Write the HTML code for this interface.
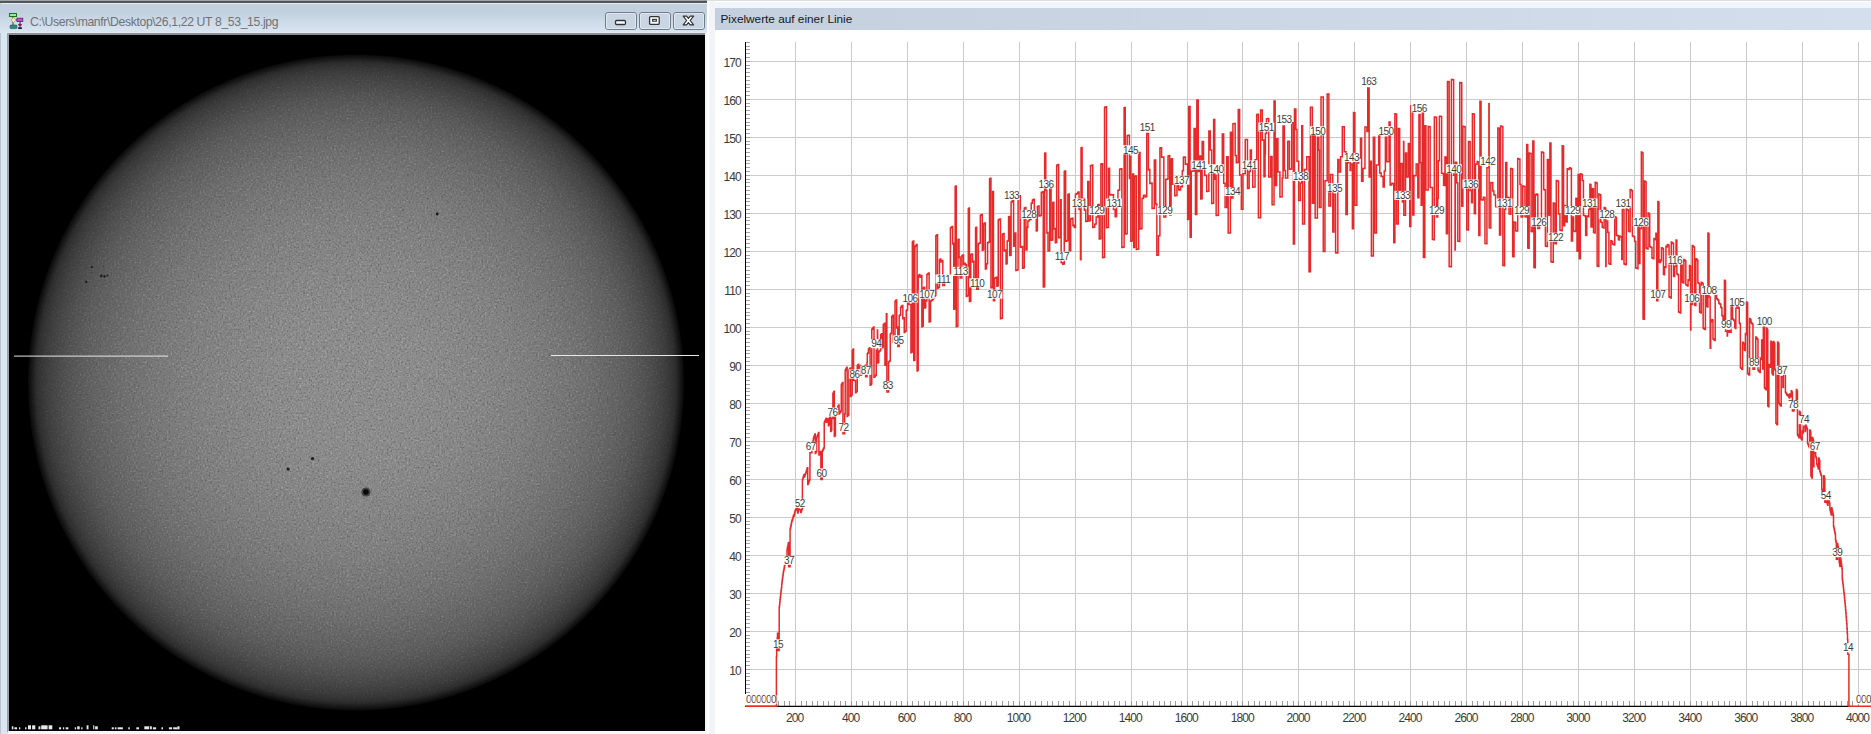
<!DOCTYPE html><html><head><meta charset="utf-8"><style>
html,body{margin:0;padding:0;background:#fff}body{width:1871px;height:734px;overflow:hidden;position:relative;font-family:"Liberation Sans",sans-serif}
svg{position:absolute;left:0;top:0}text{font-family:"Liberation Sans",sans-serif}
</style></head><body>
<svg width="1871" height="734" viewBox="0 0 1871 734">
<defs>
<linearGradient id="tg" x1="0" y1="0" x2="0" y2="1"><stop offset="0" stop-color="#c3cfdb"/><stop offset="0.3" stop-color="#c2d0de"/><stop offset="1" stop-color="#dae6f2"/></linearGradient>
<linearGradient id="rtg" x1="0" y1="0" x2="1" y2="0"><stop offset="0" stop-color="#c4d0de"/><stop offset="1" stop-color="#d3dfed"/></linearGradient>
<radialGradient id="sunm" cx="356" cy="382.5" r="328" gradientUnits="userSpaceOnUse"><stop offset="0.000" stop-color="#ffffff"/><stop offset="0.025" stop-color="#fefefe"/><stop offset="0.050" stop-color="#fefefe"/><stop offset="0.075" stop-color="#fefefe"/><stop offset="0.100" stop-color="#fdfdfd"/><stop offset="0.125" stop-color="#fdfdfd"/><stop offset="0.150" stop-color="#fcfcfc"/><stop offset="0.175" stop-color="#fbfbfb"/><stop offset="0.200" stop-color="#f9f9f9"/><stop offset="0.225" stop-color="#f8f8f8"/><stop offset="0.250" stop-color="#f7f7f7"/><stop offset="0.275" stop-color="#f5f5f5"/><stop offset="0.300" stop-color="#f3f3f3"/><stop offset="0.325" stop-color="#f1f1f1"/><stop offset="0.350" stop-color="#eeeeee"/><stop offset="0.375" stop-color="#ececec"/><stop offset="0.400" stop-color="#e9e9e9"/><stop offset="0.425" stop-color="#e6e6e6"/><stop offset="0.450" stop-color="#e3e3e3"/><stop offset="0.475" stop-color="#e0e0e0"/><stop offset="0.500" stop-color="#dcdcdc"/><stop offset="0.525" stop-color="#d8d8d8"/><stop offset="0.550" stop-color="#d4d4d4"/><stop offset="0.575" stop-color="#cfcfcf"/><stop offset="0.600" stop-color="#cacaca"/><stop offset="0.625" stop-color="#c5c5c5"/><stop offset="0.650" stop-color="#bfbfbf"/><stop offset="0.675" stop-color="#b9b9b9"/><stop offset="0.700" stop-color="#b3b3b3"/><stop offset="0.725" stop-color="#acacac"/><stop offset="0.750" stop-color="#a4a4a4"/><stop offset="0.775" stop-color="#9c9c9c"/><stop offset="0.800" stop-color="#939393"/><stop offset="0.825" stop-color="#898989"/><stop offset="0.850" stop-color="#7e7e7e"/><stop offset="0.875" stop-color="#727272"/><stop offset="0.900" stop-color="#656565"/><stop offset="0.925" stop-color="#565656"/><stop offset="0.950" stop-color="#444444"/><stop offset="0.975" stop-color="#2d2d2d"/><stop offset="1.000" stop-color="#030303"/></radialGradient>
<radialGradient id="sun" cx="356" cy="382.5" r="328" gradientUnits="userSpaceOnUse"><stop offset="0.000" stop-color="#8e8e8e"/><stop offset="0.025" stop-color="#8d8d8d"/><stop offset="0.050" stop-color="#8d8d8d"/><stop offset="0.075" stop-color="#8d8d8d"/><stop offset="0.100" stop-color="#8d8d8d"/><stop offset="0.125" stop-color="#8d8d8d"/><stop offset="0.150" stop-color="#8c8c8c"/><stop offset="0.175" stop-color="#8c8c8c"/><stop offset="0.200" stop-color="#8c8c8c"/><stop offset="0.225" stop-color="#8b8b8b"/><stop offset="0.250" stop-color="#8b8b8b"/><stop offset="0.275" stop-color="#8a8a8a"/><stop offset="0.300" stop-color="#898989"/><stop offset="0.325" stop-color="#888888"/><stop offset="0.350" stop-color="#878787"/><stop offset="0.375" stop-color="#878787"/><stop offset="0.400" stop-color="#858585"/><stop offset="0.425" stop-color="#848484"/><stop offset="0.450" stop-color="#838383"/><stop offset="0.475" stop-color="#828282"/><stop offset="0.500" stop-color="#808080"/><stop offset="0.525" stop-color="#7f7f7f"/><stop offset="0.550" stop-color="#7d7d7d"/><stop offset="0.575" stop-color="#7b7b7b"/><stop offset="0.600" stop-color="#797979"/><stop offset="0.625" stop-color="#777777"/><stop offset="0.650" stop-color="#757575"/><stop offset="0.675" stop-color="#727272"/><stop offset="0.700" stop-color="#707070"/><stop offset="0.725" stop-color="#6d6d6d"/><stop offset="0.750" stop-color="#696969"/><stop offset="0.775" stop-color="#666666"/><stop offset="0.800" stop-color="#626262"/><stop offset="0.825" stop-color="#5e5e5e"/><stop offset="0.850" stop-color="#595959"/><stop offset="0.875" stop-color="#535353"/><stop offset="0.900" stop-color="#4c4c4c"/><stop offset="0.925" stop-color="#444444"/><stop offset="0.950" stop-color="#3b3b3b"/><stop offset="0.975" stop-color="#2d2d2d"/><stop offset="1.000" stop-color="#080808"/></radialGradient>
<filter id="nzl" x="0" y="0" width="100%" height="100%"><feTurbulence type="fractalNoise" baseFrequency="0.55" numOctaves="1" seed="3"/><feColorMatrix type="matrix" values="0 0 0 0 1  0 0 0 0 1  0 0 0 0 1  3 0 0 0 -1.55"/></filter>
<filter id="nzd" x="0" y="0" width="100%" height="100%"><feTurbulence type="fractalNoise" baseFrequency="0.55" numOctaves="1" seed="9"/><feColorMatrix type="matrix" values="0 0 0 0 0  0 0 0 0 0  0 0 0 0 0  3 0 0 0 -1.55"/></filter>
<mask id="sunmask" maskUnits="userSpaceOnUse" x="0" y="0" width="710" height="734"><circle cx="356" cy="382.5" r="328" fill="url(#sunm)"/></mask>
<clipPath id="sunclip"><circle cx="356" cy="382.5" r="328"/></clipPath>
</defs>
<rect x="0" y="0" width="707" height="734" fill="#dae6f2"/>
<rect x="0" y="0" width="1" height="734" fill="#b9c5d1"/>
<rect x="0" y="3" width="707" height="30" fill="url(#tg)"/>
<rect x="0" y="0" width="707" height="1" fill="#9ea3a8"/>
<rect x="0" y="1" width="707" height="2" fill="#50565c"/>
<rect x="1" y="3" width="706" height="1" fill="#e9eef3"/>
<rect x="8" y="32" width="698" height="1" fill="#e4eaf0"/>
<rect x="8" y="33" width="698" height="2" fill="#8a8e94"/>
<rect x="7" y="33" width="2" height="699" fill="#9aa2aa"/>
<rect x="705" y="33" width="2" height="699" fill="#f4f7fa"/>
<rect x="8" y="731" width="699" height="3" fill="#f5f7f9"/>
<g><rect x="9.5" y="13.5" width="7" height="3" fill="#90f090" stroke="#207020" stroke-width="1"/><line x1="13" y1="16.5" x2="13" y2="26" stroke="#304030" stroke-width="1"/><path d="M13.5 17.5 L16 20 L13.5 22.5 L11 20 Z" fill="#f0eea0" stroke="#b0a070" stroke-width="0.8"/><rect x="10" y="25" width="7" height="3.6" rx="1" fill="#2b8a78" stroke="#1a5a50" stroke-width="0.6"/><line x1="16" y1="20" x2="17" y2="20" stroke="#303030" stroke-width="1"/><rect x="17" y="18.2" width="5.8" height="3.4" fill="#c050d0" stroke="#602070" stroke-width="0.8"/><line x1="20" y1="21.6" x2="20" y2="27" stroke="#303030" stroke-width="1"/><ellipse cx="20" cy="24.8" rx="2" ry="1.1" fill="#901838"/><rect x="18.2" y="27.2" width="3.6" height="1.8" fill="#14144a"/></g>
<text x="30" y="25.6" font-size="12.2" letter-spacing="-0.35" fill="#6f7276">C:\Users\manfr\Desktop\26,1,22 UT 8_53_15.jpg</text>
<rect x="605.5" y="12.5" width="31" height="17" rx="2.5" fill="#c9d5e2" stroke="#717c89" stroke-width="1"/>
<rect x="606.5" y="13.5" width="29" height="15" rx="1.5" fill="none" stroke="#dfe8f1" stroke-width="1"/>
<rect x="639.5" y="12.5" width="31" height="17" rx="2.5" fill="#c9d5e2" stroke="#717c89" stroke-width="1"/>
<rect x="640.5" y="13.5" width="29" height="15" rx="1.5" fill="none" stroke="#dfe8f1" stroke-width="1"/>
<rect x="673.5" y="12.5" width="31" height="17" rx="2.5" fill="#c9d5e2" stroke="#717c89" stroke-width="1"/>
<rect x="674.5" y="13.5" width="29" height="15" rx="1.5" fill="none" stroke="#dfe8f1" stroke-width="1"/>
<rect x="615.5" y="20.5" width="10" height="4" rx="1.2" fill="#ffffff" stroke="#2e3338" stroke-width="1.3"/>
<rect x="649.6" y="16.6" width="9.6" height="7.8" rx="1" fill="#ffffff" stroke="#2e3338" stroke-width="1.3"/>
<rect x="652.6" y="19.4" width="3.8" height="1.8" fill="none" stroke="#2e3338" stroke-width="1.1"/>
<path d="M683.2 16.2 L686.6 16.2 L688.4 18.4 L690.2 16.2 L693.6 16.2 L690.2 20.5 L693.6 24.8 L690.2 24.8 L688.4 22.6 L686.6 24.8 L683.2 24.8 L686.6 20.5 Z" fill="#ffffff" stroke="#2e3338" stroke-width="1.2" stroke-linejoin="round"/>
<rect x="9" y="35" width="696" height="696" fill="#000"/>
<circle cx="356" cy="382.5" r="328" fill="url(#sun)"/>
<g mask="url(#sunmask)"><rect x="28" y="54" width="657" height="658" filter="url(#nzl)" opacity="0.28"/><rect x="28" y="54" width="657" height="658" filter="url(#nzd)" opacity="0.28"/></g>
<circle cx="91.8" cy="267" r="1.1" fill="#151515" opacity="0.9"/>
<circle cx="86.3" cy="281.7" r="1.2" fill="#151515" opacity="0.9"/>
<circle cx="101.3" cy="275.9" r="1.3" fill="#151515" opacity="0.9"/>
<circle cx="104.5" cy="276.5" r="1.2" fill="#151515" opacity="0.9"/>
<circle cx="107.4" cy="275.6" r="1.0" fill="#151515" opacity="0.8"/>
<circle cx="103.4" cy="266.3" r="0.6" fill="#151515" opacity="0.6"/>
<circle cx="91.8" cy="272.5" r="0.6" fill="#151515" opacity="0.5"/>
<circle cx="288.1" cy="469.1" r="1.6" fill="#151515" opacity="0.9"/>
<circle cx="312.5" cy="458.6" r="1.7" fill="#151515" opacity="0.9"/>
<circle cx="437.2" cy="214" r="1.4" fill="#151515" opacity="1"/>
<circle cx="403.3" cy="210.1" r="0.7" fill="#151515" opacity="0.6"/>
<circle cx="365.9" cy="492" r="4.6" fill="#333" opacity="0.8"/><circle cx="365.9" cy="492" r="2.8" fill="#0a0a0a"/>
<rect x="14" y="355.6" width="154" height="1" fill="#e8e8e8"/>
<rect x="551" y="355" width="148" height="1" fill="#e8e8e8"/>
<rect x="11.8" y="726.3" width="1.6" height="3" fill="#e8e8e8"/><rect x="14.4" y="727.3" width="2.7" height="2" fill="#e8e8e8"/><rect x="19.0" y="727.3" width="1.3" height="2" fill="#e8e8e8"/><rect x="25.1" y="727.3" width="1.4" height="2" fill="#e8e8e8"/><rect x="28.0" y="725.3" width="3.0" height="4" fill="#e8e8e8"/><rect x="32.1" y="725.3" width="3.2" height="4" fill="#e8e8e8"/><rect x="38.5" y="726.3" width="1.9" height="3" fill="#e8e8e8"/><rect x="41.2" y="725.3" width="6.4" height="4" fill="#e8e8e8"/><rect x="48.6" y="725.3" width="3.7" height="4" fill="#e8e8e8"/><rect x="59.0" y="727.3" width="2.1" height="2" fill="#e8e8e8"/><rect x="62.9" y="727.3" width="1.3" height="2" fill="#e8e8e8"/><rect x="65.7" y="727.3" width="2.7" height="2" fill="#e8e8e8"/><rect x="74.8" y="727.3" width="1.3" height="2" fill="#e8e8e8"/><rect x="77.2" y="726.3" width="2.5" height="3" fill="#e8e8e8"/><rect x="81.2" y="727.3" width="1.3" height="2" fill="#e8e8e8"/><rect x="86.6" y="725.3" width="1.9" height="4" fill="#e8e8e8"/><rect x="93.2" y="725.3" width="1.1" height="4" fill="#e8e8e8"/><rect x="95.1" y="726.3" width="2.7" height="3" fill="#e8e8e8"/><rect x="111.7" y="727.3" width="2.1" height="2" fill="#e8e8e8"/><rect x="114.9" y="727.3" width="1.6" height="2" fill="#e8e8e8"/><rect x="117.6" y="727.3" width="5.3" height="2" fill="#e8e8e8"/><rect x="128.3" y="727.3" width="1.5" height="2" fill="#e8e8e8"/><rect x="136.3" y="727.3" width="2.7" height="2" fill="#e8e8e8"/><rect x="144.3" y="726.3" width="4.8" height="3" fill="#e8e8e8"/><rect x="149.9" y="726.3" width="1.9" height="3" fill="#e8e8e8"/><rect x="152.9" y="727.3" width="3.2" height="2" fill="#e8e8e8"/><rect x="161.4" y="727.3" width="1.6" height="2" fill="#e8e8e8"/><rect x="168.9" y="727.3" width="3.2" height="2" fill="#e8e8e8"/><rect x="173.2" y="727.3" width="4.3" height="2" fill="#e8e8e8"/><rect x="177.4" y="726.3" width="2.1" height="3" fill="#e8e8e8"/>
<rect x="707" y="0" width="1164" height="734" fill="#ffffff"/>
<rect x="707" y="0" width="1164" height="1" fill="#dedede"/>
<rect x="709" y="2" width="1162" height="6" fill="#f0f5fb"/>
<rect x="709" y="1" width="6" height="733" fill="#f3f4fa"/>
<rect x="715" y="8" width="1156" height="22" fill="url(#rtg)"/>
<text x="720.5" y="22.8" font-size="11.8" fill="#141824">Pixelwerte auf einer Linie</text>
<rect x="795" y="42" width="1" height="664" fill="#cbcbcb"/><rect x="851" y="42" width="1" height="664" fill="#cbcbcb"/><rect x="907" y="42" width="1" height="664" fill="#cbcbcb"/><rect x="963" y="42" width="1" height="664" fill="#cbcbcb"/><rect x="1019" y="42" width="1" height="664" fill="#cbcbcb"/><rect x="1075" y="42" width="1" height="664" fill="#cbcbcb"/><rect x="1131" y="42" width="1" height="664" fill="#cbcbcb"/><rect x="1187" y="42" width="1" height="664" fill="#cbcbcb"/><rect x="1242" y="42" width="1" height="664" fill="#cbcbcb"/><rect x="1298" y="42" width="1" height="664" fill="#cbcbcb"/><rect x="1354" y="42" width="1" height="664" fill="#cbcbcb"/><rect x="1410" y="42" width="1" height="664" fill="#cbcbcb"/><rect x="1466" y="42" width="1" height="664" fill="#cbcbcb"/><rect x="1522" y="42" width="1" height="664" fill="#cbcbcb"/><rect x="1578" y="42" width="1" height="664" fill="#cbcbcb"/><rect x="1634" y="42" width="1" height="664" fill="#cbcbcb"/><rect x="1690" y="42" width="1" height="664" fill="#cbcbcb"/><rect x="1746" y="42" width="1" height="664" fill="#cbcbcb"/><rect x="1802" y="42" width="1" height="664" fill="#cbcbcb"/><rect x="1858" y="42" width="1" height="664" fill="#cbcbcb"/><rect x="746" y="669" width="1125" height="1" fill="#cbcbcb"/><rect x="746" y="631" width="1125" height="1" fill="#cbcbcb"/><rect x="746" y="593" width="1125" height="1" fill="#cbcbcb"/><rect x="746" y="555" width="1125" height="1" fill="#cbcbcb"/><rect x="746" y="517" width="1125" height="1" fill="#cbcbcb"/><rect x="746" y="479" width="1125" height="1" fill="#cbcbcb"/><rect x="746" y="441" width="1125" height="1" fill="#cbcbcb"/><rect x="746" y="403" width="1125" height="1" fill="#cbcbcb"/><rect x="746" y="365" width="1125" height="1" fill="#cbcbcb"/><rect x="746" y="327" width="1125" height="1" fill="#cbcbcb"/><rect x="746" y="289" width="1125" height="1" fill="#cbcbcb"/><rect x="746" y="251" width="1125" height="1" fill="#cbcbcb"/><rect x="746" y="213" width="1125" height="1" fill="#cbcbcb"/><rect x="746" y="175" width="1125" height="1" fill="#cbcbcb"/><rect x="746" y="137" width="1125" height="1" fill="#cbcbcb"/><rect x="746" y="99" width="1125" height="1" fill="#cbcbcb"/><rect x="746" y="61" width="1125" height="1" fill="#cbcbcb"/>
<path d="M746 692.5h4M746 688.5h4M746 684.5h4M746 680.5h4M746 676.5h4M746 673.5h4M746 669.5h4M746 665.5h4M746 661.5h4M746 657.5h4M746 654.5h4M746 650.5h4M746 646.5h4M746 642.5h4M746 638.5h4M746 635.5h4M746 631.5h4M746 627.5h4M746 623.5h4M746 619.5h4M746 616.5h4M746 612.5h4M746 608.5h4M746 604.5h4M746 600.5h4M746 597.5h4M746 593.5h4M746 589.5h4M746 585.5h4M746 581.5h4M746 578.5h4M746 574.5h4M746 570.5h4M746 566.5h4M746 562.5h4M746 559.5h4M746 555.5h4M746 551.5h4M746 547.5h4M746 543.5h4M746 540.5h4M746 536.5h4M746 532.5h4M746 528.5h4M746 524.5h4M746 521.5h4M746 517.5h4M746 513.5h4M746 509.5h4M746 505.5h4M746 502.5h4M746 498.5h4M746 494.5h4M746 490.5h4M746 486.5h4M746 483.5h4M746 479.5h4M746 475.5h4M746 471.5h4M746 467.5h4M746 464.5h4M746 460.5h4M746 456.5h4M746 452.5h4M746 448.5h4M746 445.5h4M746 441.5h4M746 437.5h4M746 433.5h4M746 429.5h4M746 426.5h4M746 422.5h4M746 418.5h4M746 414.5h4M746 410.5h4M746 407.5h4M746 403.5h4M746 399.5h4M746 395.5h4M746 391.5h4M746 388.5h4M746 384.5h4M746 380.5h4M746 376.5h4M746 372.5h4M746 369.5h4M746 365.5h4M746 361.5h4M746 357.5h4M746 353.5h4M746 350.5h4M746 346.5h4M746 342.5h4M746 338.5h4M746 334.5h4M746 331.5h4M746 327.5h4M746 323.5h4M746 319.5h4M746 315.5h4M746 312.5h4M746 308.5h4M746 304.5h4M746 300.5h4M746 296.5h4M746 293.5h4M746 289.5h4M746 285.5h4M746 281.5h4M746 277.5h4M746 274.5h4M746 270.5h4M746 266.5h4M746 262.5h4M746 258.5h4M746 255.5h4M746 251.5h4M746 247.5h4M746 243.5h4M746 239.5h4M746 236.5h4M746 232.5h4M746 228.5h4M746 224.5h4M746 220.5h4M746 217.5h4M746 213.5h4M746 209.5h4M746 205.5h4M746 201.5h4M746 198.5h4M746 194.5h4M746 190.5h4M746 186.5h4M746 182.5h4M746 179.5h4M746 175.5h4M746 171.5h4M746 167.5h4M746 163.5h4M746 160.5h4M746 156.5h4M746 152.5h4M746 148.5h4M746 144.5h4M746 141.5h4M746 137.5h4M746 133.5h4M746 129.5h4M746 125.5h4M746 122.5h4M746 118.5h4M746 114.5h4M746 110.5h4M746 106.5h4M746 103.5h4M746 99.5h4M746 95.5h4M746 91.5h4M746 87.5h4M746 84.5h4M746 80.5h4M746 76.5h4M746 72.5h4M746 68.5h4M746 65.5h4M746 61.5h4M746 57.5h4M746 53.5h4M746 49.5h4M746 46.5h4M746 42.5h4" stroke="#a4a4a4" stroke-width="1" fill="none"/>
<path d="M778.5 701v5M784.5 701v5M789.5 701v5M795.5 701v5M801.5 701v5M806.5 701v5M812.5 701v5M817.5 701v5M823.5 701v5M828.5 701v5M834.5 701v5M840.5 701v5M845.5 701v5M851.5 701v5M856.5 701v5M862.5 701v5M868.5 701v5M873.5 701v5M879.5 701v5M884.5 701v5M890.5 701v5M896.5 701v5M901.5 701v5M907.5 701v5M912.5 701v5M918.5 701v5M924.5 701v5M929.5 701v5M935.5 701v5M940.5 701v5M946.5 701v5M952.5 701v5M957.5 701v5M963.5 701v5M968.5 701v5M974.5 701v5M980.5 701v5M985.5 701v5M991.5 701v5M996.5 701v5M1002.5 701v5M1008.5 701v5M1013.5 701v5M1019.5 701v5M1024.5 701v5M1030.5 701v5M1035.5 701v5M1041.5 701v5M1047.5 701v5M1052.5 701v5M1058.5 701v5M1063.5 701v5M1069.5 701v5M1075.5 701v5M1080.5 701v5M1086.5 701v5M1091.5 701v5M1097.5 701v5M1103.5 701v5M1108.5 701v5M1114.5 701v5M1119.5 701v5M1125.5 701v5M1131.5 701v5M1136.5 701v5M1142.5 701v5M1147.5 701v5M1153.5 701v5M1159.5 701v5M1164.5 701v5M1170.5 701v5M1175.5 701v5M1181.5 701v5M1187.5 701v5M1192.5 701v5M1198.5 701v5M1203.5 701v5M1209.5 701v5M1215.5 701v5M1220.5 701v5M1226.5 701v5M1231.5 701v5M1237.5 701v5M1242.5 701v5M1248.5 701v5M1254.5 701v5M1259.5 701v5M1265.5 701v5M1270.5 701v5M1276.5 701v5M1282.5 701v5M1287.5 701v5M1293.5 701v5M1298.5 701v5M1304.5 701v5M1310.5 701v5M1315.5 701v5M1321.5 701v5M1326.5 701v5M1332.5 701v5M1338.5 701v5M1343.5 701v5M1349.5 701v5M1354.5 701v5M1360.5 701v5M1366.5 701v5M1371.5 701v5M1377.5 701v5M1382.5 701v5M1388.5 701v5M1394.5 701v5M1399.5 701v5M1405.5 701v5M1410.5 701v5M1416.5 701v5M1422.5 701v5M1427.5 701v5M1433.5 701v5M1438.5 701v5M1444.5 701v5M1449.5 701v5M1455.5 701v5M1461.5 701v5M1466.5 701v5M1472.5 701v5M1477.5 701v5M1483.5 701v5M1489.5 701v5M1494.5 701v5M1500.5 701v5M1505.5 701v5M1511.5 701v5M1517.5 701v5M1522.5 701v5M1528.5 701v5M1533.5 701v5M1539.5 701v5M1545.5 701v5M1550.5 701v5M1556.5 701v5M1561.5 701v5M1567.5 701v5M1573.5 701v5M1578.5 701v5M1584.5 701v5M1589.5 701v5M1595.5 701v5M1601.5 701v5M1606.5 701v5M1612.5 701v5M1617.5 701v5M1623.5 701v5M1629.5 701v5M1634.5 701v5M1640.5 701v5M1645.5 701v5M1651.5 701v5M1657.5 701v5M1662.5 701v5M1668.5 701v5M1673.5 701v5M1679.5 701v5M1684.5 701v5M1690.5 701v5M1696.5 701v5M1701.5 701v5M1707.5 701v5M1712.5 701v5M1718.5 701v5M1724.5 701v5M1729.5 701v5M1735.5 701v5M1740.5 701v5M1746.5 701v5M1752.5 701v5M1757.5 701v5M1763.5 701v5M1768.5 701v5M1774.5 701v5M1780.5 701v5M1785.5 701v5M1791.5 701v5M1796.5 701v5M1802.5 701v5M1808.5 701v5M1813.5 701v5M1819.5 701v5M1824.5 701v5M1830.5 701v5M1836.5 701v5M1841.5 701v5M1847.5 701v5M1852.5 701v5M1858.5 701v5" stroke="#9a9a9a" stroke-width="1" fill="none"/>
<rect x="745" y="42" width="1" height="652" fill="#000"/>
<rect x="745" y="706" width="1106" height="1" fill="#000"/><rect x="745" y="705" width="1106" height="1" fill="#000" opacity="0.25"/>
<text x="741" y="674.7" font-size="12" text-anchor="end" fill="#3a3a3a" letter-spacing="-0.8">10</text><text x="741" y="636.7" font-size="12" text-anchor="end" fill="#3a3a3a" letter-spacing="-0.8">20</text><text x="741" y="598.7" font-size="12" text-anchor="end" fill="#3a3a3a" letter-spacing="-0.8">30</text><text x="741" y="560.7" font-size="12" text-anchor="end" fill="#3a3a3a" letter-spacing="-0.8">40</text><text x="741" y="522.7" font-size="12" text-anchor="end" fill="#3a3a3a" letter-spacing="-0.8">50</text><text x="741" y="484.7" font-size="12" text-anchor="end" fill="#3a3a3a" letter-spacing="-0.8">60</text><text x="741" y="446.7" font-size="12" text-anchor="end" fill="#3a3a3a" letter-spacing="-0.8">70</text><text x="741" y="408.7" font-size="12" text-anchor="end" fill="#3a3a3a" letter-spacing="-0.8">80</text><text x="741" y="370.7" font-size="12" text-anchor="end" fill="#3a3a3a" letter-spacing="-0.8">90</text><text x="741" y="332.6" font-size="12" text-anchor="end" fill="#3a3a3a" letter-spacing="-0.8">100</text><text x="741" y="294.6" font-size="12" text-anchor="end" fill="#3a3a3a" letter-spacing="-0.8">110</text><text x="741" y="256.6" font-size="12" text-anchor="end" fill="#3a3a3a" letter-spacing="-0.8">120</text><text x="741" y="218.6" font-size="12" text-anchor="end" fill="#3a3a3a" letter-spacing="-0.8">130</text><text x="741" y="180.6" font-size="12" text-anchor="end" fill="#3a3a3a" letter-spacing="-0.8">140</text><text x="741" y="142.6" font-size="12" text-anchor="end" fill="#3a3a3a" letter-spacing="-0.8">150</text><text x="741" y="104.6" font-size="12" text-anchor="end" fill="#3a3a3a" letter-spacing="-0.8">160</text><text x="741" y="66.6" font-size="12" text-anchor="end" fill="#3a3a3a" letter-spacing="-0.8">170</text><text x="794.6" y="721.8" font-size="12" text-anchor="middle" fill="#3a3a3a" letter-spacing="-0.9">200</text><text x="850.6" y="721.8" font-size="12" text-anchor="middle" fill="#3a3a3a" letter-spacing="-0.9">400</text><text x="906.5" y="721.8" font-size="12" text-anchor="middle" fill="#3a3a3a" letter-spacing="-0.9">600</text><text x="962.5" y="721.8" font-size="12" text-anchor="middle" fill="#3a3a3a" letter-spacing="-0.9">800</text><text x="1018.4" y="721.8" font-size="12" text-anchor="middle" fill="#3a3a3a" letter-spacing="-0.9">1000</text><text x="1074.3" y="721.8" font-size="12" text-anchor="middle" fill="#3a3a3a" letter-spacing="-0.9">1200</text><text x="1130.3" y="721.8" font-size="12" text-anchor="middle" fill="#3a3a3a" letter-spacing="-0.9">1400</text><text x="1186.2" y="721.8" font-size="12" text-anchor="middle" fill="#3a3a3a" letter-spacing="-0.9">1600</text><text x="1242.2" y="721.8" font-size="12" text-anchor="middle" fill="#3a3a3a" letter-spacing="-0.9">1800</text><text x="1298.1" y="721.8" font-size="12" text-anchor="middle" fill="#3a3a3a" letter-spacing="-0.9">2000</text><text x="1354.1" y="721.8" font-size="12" text-anchor="middle" fill="#3a3a3a" letter-spacing="-0.9">2200</text><text x="1410.0" y="721.8" font-size="12" text-anchor="middle" fill="#3a3a3a" letter-spacing="-0.9">2400</text><text x="1466.0" y="721.8" font-size="12" text-anchor="middle" fill="#3a3a3a" letter-spacing="-0.9">2600</text><text x="1521.9" y="721.8" font-size="12" text-anchor="middle" fill="#3a3a3a" letter-spacing="-0.9">2800</text><text x="1577.9" y="721.8" font-size="12" text-anchor="middle" fill="#3a3a3a" letter-spacing="-0.9">3000</text><text x="1633.8" y="721.8" font-size="12" text-anchor="middle" fill="#3a3a3a" letter-spacing="-0.9">3200</text><text x="1689.8" y="721.8" font-size="12" text-anchor="middle" fill="#3a3a3a" letter-spacing="-0.9">3400</text><text x="1745.7" y="721.8" font-size="12" text-anchor="middle" fill="#3a3a3a" letter-spacing="-0.9">3600</text><text x="1801.7" y="721.8" font-size="12" text-anchor="middle" fill="#3a3a3a" letter-spacing="-0.9">3800</text><text x="1857.6" y="721.8" font-size="12" text-anchor="middle" fill="#3a3a3a" letter-spacing="-0.9">4000</text>
<path d="M745.33 706.2H776.39V657.1H776.67V649.0H776.95V642.9H777.22V637.7H777.50V633.3H777.78V650.4H779.18V606.9H779.46V605.0H779.74V602.2H780.02V599.5H780.30V596.9H780.58V594.5H780.86V592.1H781.14V589.7H781.42V587.5H781.70V583.9H781.98V581.7H782.26V579.6H782.54V577.5H782.82V575.5H783.10V573.5H783.38V571.6H783.66V570.8H783.94V569.0H784.22V567.2H784.50V565.4H784.78V563.7H785.06V562.0H785.34V560.3H785.62V563.0H785.90V561.5H786.18V560.0H786.46V558.5H786.74V557.0H787.02V549.8H787.30V548.3H787.58V546.8H787.86V545.4H788.13V543.9H788.41V542.5H788.69V566.8H790.09V529.3H790.37V527.9H790.65V526.5H790.93V525.2H791.21V523.9H791.49V522.6H791.77V521.3H792.05V520.0H792.33V520.2H792.61V519.0H792.89V517.7H793.17V516.5H793.45V515.3H793.73V516.5H794.01V515.3H794.29V514.2H794.57V513.0H794.85V511.9H795.13V510.8H795.41V509.7H795.69V510.6H795.97V509.5H796.25V508.4H796.53V507.4H796.81V506.3H797.09V505.3H797.37V504.3H797.65V512.9H797.93V511.9H798.21V511.0H798.49V510.1H798.76V509.1H799.04V509.8H800.72V512.5H801.00V511.7H801.28V510.9H801.56V510.1H801.84V509.4H802.12V508.6H802.40V479.9H802.68V479.0H802.96V478.1H803.24V477.1H803.52V476.2H803.80V475.3H804.08V474.4H804.36V476.9H804.64V476.0H804.92V475.1H805.20V474.3H805.48V473.7H805.76V472.9H806.04V472.0H806.32V471.2H806.60V470.3H806.88V469.5H807.16V468.6H807.44V467.8H807.72V484.6H808.00V483.9H808.28V483.2H808.56V482.5H808.84V481.7H809.12V481.0H809.39V480.3H809.67V479.6H809.95V452.8H811.91V444.1H812.19V443.3H812.47V442.5H812.75V441.7H813.03V440.9H813.31V438.7H813.59V437.9H813.87V437.1H814.15V436.3H814.43V435.6H814.71V434.8H814.99V434.0H815.27V453.6H815.55V452.9H815.83V452.2H816.11V451.5H816.39V450.9H816.67V437.6H816.95V436.9H817.23V436.1H817.51V435.4H817.79V434.7H818.07V434.0H818.35V433.3H818.63V432.6H818.91V455.1H819.19V454.5H819.47V453.9H819.75V453.3H820.03V452.7H820.30V452.1H820.58V451.5H820.86V479.4H822.26V451.2H822.54V450.6H822.82V450.1H823.10V449.5H823.38V448.9H823.66V448.4H823.94V447.8H824.22V422.7H824.50V422.1H824.78V421.5H825.06V420.8H825.34V420.2H825.62V419.6H825.90V419.0H826.18V418.3H826.46V422.3H826.74V421.7H827.02V421.1H827.30V420.6H827.58V420.0H827.86V419.4H828.14V418.8H828.42V425.7H828.70V425.1H828.98V424.6H829.26V424.0H829.54V414.5H829.82V413.9H830.10V413.4H830.38V412.8H830.66V431.4H830.93V430.9H831.21V430.4H831.49V429.9H831.77V418.6H832.89V393.7H833.17V393.1H833.45V392.5H833.73V391.9H834.01V391.3H834.29V436.6H834.57V436.1H834.85V435.7H835.13V435.2H835.41V412.7H835.69V412.2H835.97V411.7H836.25V411.2H836.53V410.7H836.81V410.2H837.09V409.7H837.37V409.2H837.65V406.9H837.93V406.4H838.21V405.9H838.49V405.4H838.77V404.9H839.05V414.0H839.33V413.6H839.61V413.1H839.89V412.6H840.17V412.2H840.45V411.7H840.73V411.2H841.01V410.8H841.29V385.0H841.57V384.5H841.84V384.0H842.12V383.5H842.40V383.0H842.68V382.5H842.96V433.8H844.64V414.1H844.92V413.7H845.20V370.4H845.48V369.9H845.76V369.4H846.04V368.8H846.32V368.3H846.60V367.8H846.88V367.3H847.16V416.4H847.44V416.0H847.72V415.6H848.00V415.2H848.28V414.8H848.56V414.4H848.84V370.4H849.12V369.9H849.40V369.5H849.68V369.0H849.96V368.5H850.24V368.0H850.52V396.5H850.80V396.1H851.08V395.7H851.36V395.3H851.64V394.9H851.92V394.5H852.20V351.0H852.47V350.5H852.75V350.0H853.03V349.5H853.31V349.0H853.59V380.6H855.55V392.8H855.83V392.4H856.11V392.1H856.39V391.7H856.67V391.3H856.95V390.9H857.23V366.0H857.51V365.6H857.79V365.1H858.07V364.7H858.35V364.3H858.63V368.4H858.91V368.0H859.19V367.6H859.47V367.2H859.75V366.8H860.03V366.4H860.31V366.0H860.59V365.6H860.87V375.2H861.15V374.8H861.43V374.4H861.71V374.0H861.99V373.6H862.27V373.2H862.55V372.9H862.83V372.5H863.11V371.4H863.38V371.1H863.66V370.7H863.94V370.3H864.22V369.9H864.50V366.4H864.78V366.0H865.06V365.7H865.34V365.3H865.62V376.8H867.02V362.2H867.30V353.8H867.58V353.4H867.86V353.0H868.14V352.7H868.42V349.6H868.70V349.2H868.98V348.9H869.26V348.5H869.54V348.1H869.82V347.7H870.10V385.3H870.38V385.0H870.66V384.7H870.94V384.4H871.22V384.0H871.50V383.7H871.78V329.6H872.06V329.2H872.34V328.8H872.62V328.4H872.90V328.1H873.18V327.7H873.46V327.3H873.74V326.9H874.01V377.2H874.29V376.9H874.57V376.5H874.85V376.2H875.13V375.9H875.41V375.6H875.69V375.3H875.97V375.0H876.25V350.2H877.37V329.9H877.65V363.1H877.93V362.8H878.21V362.4H878.49V362.1H878.77V352.0H879.05V351.7H879.33V351.3H879.61V351.0H879.89V350.7H880.17V350.4H880.45V350.0H880.73V335.0H881.01V334.7H881.29V334.3H881.57V334.0H881.85V333.7H882.13V347.8H882.41V347.5H882.69V347.1H882.97V346.8H883.25V325.0H883.53V324.7H883.81V324.3H884.09V324.0H884.37V323.6H884.65V323.3H884.92V365.2H885.20V364.9H885.48V364.6H885.76V364.4H886.04V364.1H886.32V314.0H886.60V313.7H886.88V392.0H888.56V362.1H888.84V361.9H889.12V361.6H889.40V361.3H889.68V361.0H889.96V360.8H890.24V334.2H890.52V333.9H890.80V333.6H891.08V333.3H891.36V333.0H891.64V317.0H891.92V316.6H892.20V316.3H892.48V316.0H892.76V315.7H893.04V315.3H893.32V342.2H893.60V341.9H893.88V341.6H894.16V341.4H894.44V341.1H894.72V340.8H895.00V301.6H895.28V301.3H895.55V300.9H895.83V300.6H896.11V300.3H896.39V300.0H896.67V327.9H896.95V327.6H897.23V327.3H897.51V327.0H897.79V346.4H899.19V315.9H899.47V315.6H899.75V315.3H900.03V315.0H900.31V314.7H900.59V307.5H900.87V307.2H901.15V306.9H901.43V306.6H901.71V306.3H901.99V306.0H902.27V305.7H902.55V305.4H902.83V318.8H903.11V318.5H903.39V318.3H903.67V318.0H903.95V317.7H904.23V332.4H904.51V332.1H904.79V331.9H905.07V331.6H905.35V331.4H905.63V331.1H905.91V330.8H906.19V310.8H906.46V310.5H906.74V310.2H907.02V310.0H907.30V309.7H907.58V298.9H907.86V298.6H908.14V298.3H908.42V298.0H908.70V297.7H908.98V304.5H910.94V352.7H911.22V352.5H911.50V352.3H911.78V352.1H912.06V351.8H912.34V242.3H912.62V242.0H912.90V241.6H913.18V241.3H913.46V241.0H913.74V360.6H914.02V360.4H914.30V360.2H914.58V359.9H914.86V246.7H915.14V246.4H915.42V246.1H915.70V245.7H915.98V245.4H916.26V245.1H916.54V244.8H916.82V244.5H917.09V370.9H917.37V370.7H917.65V370.5H917.93V370.3H918.21V275.9H918.49V275.7H918.77V275.4H919.05V275.1H919.33V274.8H919.61V274.5H919.89V277.2H920.17V276.9H920.45V276.7H920.73V276.4H921.01V276.1H921.29V275.9H921.57V275.6H921.85V326.8H922.13V326.6H922.41V326.3H922.69V326.1H922.97V325.9H923.25V288.3H923.53V288.1H923.81V287.8H924.09V287.6H924.37V287.3H924.65V308.1H924.93V307.9H925.21V307.6H925.49V307.4H925.77V300.7H926.89V274.8H927.17V274.6H927.45V274.3H927.73V274.0H928.00V273.8H928.28V273.5H928.56V273.3H928.84V273.0H929.12V322.0H929.40V321.8H929.68V321.6H929.96V321.4H930.24V321.2H930.52V301.3H930.80V301.1H931.08V300.9H931.36V300.6H931.64V300.4H931.92V300.2H932.20V299.7H932.48V299.4H932.76V299.2H933.04V299.0H933.32V298.8H933.60V298.6H933.88V298.3H934.16V296.5H934.44V296.3H934.72V296.0H935.00V295.8H935.28V295.6H935.56V295.4H935.84V236.1H936.12V235.8H936.40V235.6H936.68V235.3H936.96V235.0H937.24V234.8H937.52V288.3H937.80V288.1H938.08V287.8H938.36V287.6H938.63V287.4H938.91V287.2H939.19V286.9H939.47V259.9H939.75V259.6H940.03V259.4H940.31V259.2H940.59V258.9H940.87V261.9H941.15V261.7H941.43V261.5H941.71V261.2H941.99V261.0H942.27V260.8H942.55V260.5H942.83V285.5H944.51V276.7H944.79V276.5H945.07V276.3H945.35V276.1H945.63V275.9H945.91V275.6H946.19V275.4H946.47V281.7H946.75V281.4H947.03V281.2H947.31V281.0H947.59V280.8H947.87V280.6H948.15V280.4H948.43V280.2H948.71V279.4H948.99V279.2H949.26V278.9H949.54V278.7H949.82V278.5H950.10V278.3H950.38V228.1H950.66V227.9H950.94V227.6H951.22V227.4H951.50V227.2H951.78V226.9H952.06V226.7H952.34V226.4H952.62V243.9H952.90V243.7H953.18V243.4H953.46V243.2H953.74V309.3H954.02V309.1H954.30V308.9H954.58V308.7H954.86V308.6H955.14V186.7H955.42V186.4H955.70V186.2H955.98V185.9H956.26V326.7H956.54V326.5H956.82V326.4H957.10V326.2H957.38V326.1H957.66V325.9H957.94V239.9H958.22V239.7H958.50V239.5H958.78V239.3H959.06V257.6H959.34V257.4H959.62V257.2H959.90V257.0H960.17V277.9H961.85V256.0H962.13V255.8H962.41V255.5H962.69V255.3H962.97V255.1H963.25V254.9H963.53V264.2H963.81V264.0H964.09V263.8H964.37V263.6H964.65V263.5H964.93V263.3H965.21V264.9H965.49V264.8H965.77V264.6H966.05V264.4H966.33V296.4H966.61V296.3H966.89V296.1H967.17V295.9H967.45V295.8H967.73V295.6H968.01V295.4H968.29V208.8H968.57V208.6H968.85V208.4H969.13V208.1H969.41V301.6H969.69V301.4H969.97V301.2H970.25V301.1H970.53V300.9H970.80V254.8H971.08V254.6H971.36V254.5H971.64V254.3H971.92V254.1H972.20V253.9H972.48V262.0H972.76V261.8H973.04V261.6H973.32V261.4H973.60V261.3H973.88V282.8H974.16V282.7H974.44V282.5H974.72V282.3H975.00V282.2H975.28V282.0H975.56V227.9H975.84V227.7H976.12V227.5H976.40V227.3H976.68V289.3H978.36V243.9H978.64V243.7H978.92V243.5H979.20V243.3H979.48V243.2H979.76V243.0H980.04V242.8H980.32V215.5H980.60V215.3H980.88V215.1H981.16V214.9H981.44V214.7H981.71V214.6H981.99V214.4H982.27V250.2H982.55V250.1H982.83V249.9H983.11V249.7H983.39V249.5H983.67V223.9H983.95V223.7H984.23V223.5H984.51V223.4H984.79V223.2H985.07V223.0H985.35V269.0H985.63V268.8H985.91V268.7H986.19V268.5H986.47V264.1H986.75V263.9H987.03V263.7H987.31V263.6H987.59V242.8H987.87V242.7H988.15V242.5H988.43V242.3H988.71V242.2H988.99V242.0H989.27V241.8H989.55V179.0H989.83V178.8H990.11V178.6H990.39V178.4H990.67V178.2H990.95V287.8H991.23V287.7H991.51V287.5H991.79V287.4H992.07V287.2H992.34V287.1H992.62V191.8H992.90V191.6H993.18V191.4H993.46V300.7H994.58V278.3H994.86V278.2H995.14V278.0H995.42V277.9H995.70V277.7H995.98V277.6H996.26V277.4H996.54V277.3H996.82V286.2H997.10V286.1H997.38V285.9H997.66V285.8H997.94V285.7H998.22V220.1H998.50V220.0H998.78V219.8H999.06V219.6H999.34V219.5H999.62V219.3H999.90V219.1H1000.18V219.0H1000.46V318.7H1000.74V318.5H1001.02V318.4H1001.30V318.3H1001.58V318.2H1001.86V318.1H1002.14V318.0H1002.42V234.3H1002.70V234.2H1002.98V234.0H1003.25V233.8H1003.53V233.7H1003.81V233.5H1004.09V250.9H1004.37V250.7H1004.65V250.6H1004.93V250.4H1005.21V250.3H1005.49V250.1H1005.77V250.0H1006.05V263.9H1006.33V263.8H1006.61V263.6H1006.89V263.5H1007.17V241.2H1007.45V241.0H1007.73V240.9H1008.01V240.7H1008.29V240.6H1008.57V217.0H1008.85V216.8H1009.13V216.7H1009.41V216.5H1009.69V255.6H1009.97V255.4H1010.25V255.3H1010.53V255.2H1010.81V255.0H1011.09V201.9H1012.21V195.2H1012.49V195.0H1012.77V194.8H1013.05V194.7H1013.33V194.5H1013.61V246.3H1013.88V246.1H1014.16V246.0H1014.44V245.9H1014.72V233.5H1015.00V233.3H1015.28V233.2H1015.56V233.0H1015.84V270.5H1016.12V270.4H1016.40V270.3H1016.68V270.2H1016.96V270.0H1017.24V269.9H1017.52V269.8H1017.80V269.7H1018.08V196.8H1018.36V196.7H1018.64V196.5H1018.92V196.3H1019.20V196.2H1019.48V196.0H1019.76V195.9H1020.04V195.7H1020.32V247.3H1020.60V247.2H1020.88V247.0H1021.16V246.9H1021.44V246.8H1021.72V246.6H1022.00V246.5H1022.28V246.4H1022.56V268.3H1022.84V268.2H1023.12V268.1H1023.40V267.9H1023.68V267.8H1023.96V267.7H1024.24V208.2H1024.52V208.0H1024.79V207.9H1025.07V207.7H1025.35V207.6H1025.63V207.5H1025.91V250.0H1026.19V249.9H1026.47V249.8H1026.75V249.6H1027.03V227.5H1027.31V227.4H1027.59V227.3H1027.87V220.9H1029.27V219.9H1029.55V219.8H1029.83V219.6H1030.11V219.5H1030.39V219.4H1030.67V219.2H1030.95V219.1H1031.23V203.4H1031.51V203.2H1031.79V203.1H1032.07V203.0H1032.35V200.2H1032.63V200.0H1032.91V199.9H1033.19V199.7H1033.47V199.6H1033.75V199.5H1034.03V199.3H1034.31V215.4H1034.59V215.3H1034.87V215.2H1035.15V215.1H1035.42V214.9H1035.70V214.8H1035.98V214.7H1036.26V230.9H1036.54V230.7H1036.82V230.6H1037.10V230.5H1037.38V206.6H1037.66V206.4H1037.94V206.3H1038.22V206.2H1038.50V206.0H1038.78V205.9H1039.06V216.1H1039.34V216.0H1039.62V215.9H1039.90V215.7H1040.18V215.6H1040.46V215.5H1040.74V215.4H1041.02V215.2H1041.30V192.6H1041.58V192.5H1041.86V192.3H1042.14V192.2H1042.42V192.0H1042.70V191.9H1042.98V191.8H1043.26V287.0H1043.54V286.9H1043.82V286.8H1044.10V286.7H1044.38V286.6H1044.66V153.4H1044.94V153.2H1045.22V153.1H1045.50V152.9H1045.78V190.5H1046.89V233.0H1047.17V232.9H1047.45V232.8H1047.73V232.6H1048.01V251.1H1048.29V251.0H1048.57V250.9H1048.85V250.8H1049.13V250.7H1049.41V250.6H1049.69V181.1H1049.97V181.0H1050.25V180.9H1050.53V180.7H1050.81V180.6H1051.09V240.3H1051.37V240.2H1051.65V240.1H1051.93V240.0H1052.21V239.9H1052.49V239.8H1052.77V202.7H1053.05V202.6H1053.33V202.5H1053.61V202.3H1053.89V228.9H1054.17V228.8H1054.45V228.7H1054.73V228.6H1055.01V228.5H1055.29V242.8H1055.57V242.7H1055.85V242.6H1056.13V242.5H1056.41V242.4H1056.69V165.4H1056.96V165.2H1057.24V165.1H1057.52V165.0H1057.80V164.9H1058.08V164.7H1058.36V164.6H1058.64V237.8H1058.92V237.7H1059.20V237.6H1059.48V237.5H1059.76V237.4H1060.04V237.3H1060.32V237.2H1060.60V199.8H1060.88V199.7H1061.16V262.7H1062.84V264.3H1063.12V264.2H1063.40V264.1H1063.68V264.0H1063.96V263.9H1064.24V171.5H1064.52V171.4H1064.80V171.3H1065.08V171.1H1065.36V171.0H1065.64V241.2H1065.92V241.1H1066.20V241.1H1066.48V241.0H1066.76V240.9H1067.04V240.8H1067.32V240.7H1067.60V240.6H1067.87V194.6H1068.15V194.4H1068.43V194.3H1068.71V194.2H1068.99V194.1H1069.27V251.0H1069.55V250.9H1069.83V250.8H1070.11V250.7H1070.39V250.6H1070.67V218.9H1070.95V218.8H1071.23V218.7H1071.51V218.6H1071.79V218.5H1072.07V218.4H1072.35V218.3H1072.63V218.2H1072.91V225.7H1073.19V225.6H1073.47V225.5H1073.75V225.4H1074.03V225.3H1074.31V227.6H1074.59V227.5H1074.87V227.4H1075.15V227.3H1075.43V194.3H1075.71V194.2H1075.99V194.1H1076.27V194.0H1076.55V193.9H1076.83V193.7H1077.11V193.6H1077.39V193.5H1077.67V192.4H1077.95V192.3H1078.23V192.2H1078.50V192.1H1078.78V191.9H1079.06V209.5H1080.46V259.7H1080.74V259.6H1081.02V147.9H1081.30V147.8H1081.58V147.7H1081.86V147.6H1082.14V199.3H1082.42V199.2H1082.70V199.1H1082.98V199.0H1083.26V198.9H1083.54V198.8H1083.82V198.7H1084.10V198.6H1084.38V210.2H1084.66V210.1H1084.94V210.1H1085.22V210.0H1085.50V209.9H1085.78V221.6H1086.06V221.5H1086.34V221.4H1086.62V221.3H1086.90V221.2H1087.18V221.2H1087.46V221.1H1087.74V181.7H1088.02V181.6H1088.30V181.5H1088.58V181.4H1088.86V221.0H1089.13V220.9H1089.41V220.8H1089.69V220.7H1089.97V220.6H1090.25V220.5H1090.53V165.8H1090.81V165.7H1091.09V165.6H1091.37V165.5H1091.65V165.4H1091.93V165.3H1092.21V165.2H1092.49V165.1H1092.77V227.5H1093.05V227.4H1093.33V227.3H1093.61V227.2H1093.89V227.1H1094.17V227.1H1094.45V227.0H1094.73V224.3H1095.01V224.2H1095.29V224.1H1095.57V224.0H1095.85V223.9H1096.13V217.1H1097.81V204.7H1098.09V204.6H1098.37V204.5H1098.65V204.5H1098.93V204.4H1099.21V238.9H1099.49V238.9H1099.77V238.8H1100.04V238.7H1100.32V238.6H1100.60V238.5H1100.88V164.2H1101.16V164.1H1101.44V164.0H1101.72V163.9H1102.00V163.8H1102.28V163.7H1102.56V257.7H1102.84V257.6H1103.12V257.5H1103.40V257.5H1103.68V257.4H1103.96V257.3H1104.24V257.2H1104.52V107.4H1104.80V107.3H1105.08V107.2H1105.36V107.1H1105.64V107.0H1105.92V106.9H1106.20V106.8H1106.48V227.7H1106.76V227.6H1107.04V227.5H1107.32V227.4H1107.60V227.4H1107.88V227.3H1108.16V227.2H1108.44V168.5H1108.72V168.5H1109.00V168.4H1109.28V168.3H1109.56V195.1H1109.84V195.0H1110.12V194.9H1110.40V194.8H1110.67V194.7H1110.95V194.7H1111.23V194.6H1111.51V194.5H1111.79V195.1H1112.07V195.0H1112.35V195.0H1112.63V194.9H1112.91V194.8H1113.19V194.7H1113.47V209.5H1115.15V216.8H1115.43V216.7H1115.71V216.7H1115.99V216.6H1116.27V216.5H1116.55V206.7H1116.83V206.6H1117.11V206.5H1117.39V206.4H1117.67V206.3H1117.95V190.3H1118.23V190.2H1118.51V190.2H1118.79V190.1H1119.07V190.0H1119.35V189.9H1119.63V169.3H1119.91V169.2H1120.19V169.1H1120.47V169.0H1120.75V168.9H1121.03V168.9H1121.31V168.8H1121.58V168.7H1121.86V247.5H1122.14V247.5H1122.42V247.4H1122.70V247.3H1122.98V247.3H1123.26V247.2H1123.54V247.1H1123.82V247.1H1124.10V107.8H1124.38V107.7H1124.66V107.6H1124.94V107.5H1125.22V234.1H1125.50V234.0H1125.78V234.0H1126.06V233.9H1126.34V233.8H1126.62V233.8H1126.90V233.7H1127.18V135.8H1127.46V135.7H1127.74V135.6H1128.02V135.5H1128.30V135.4H1128.58V135.3H1128.86V135.3H1129.14V135.2H1129.42V178.5H1129.70V156.3H1130.82V241.2H1131.10V241.1H1131.38V241.1H1131.66V241.0H1131.94V240.9H1132.21V240.9H1132.49V174.2H1132.77V174.1H1133.05V174.0H1133.33V173.9H1133.61V247.6H1133.89V247.5H1134.17V247.5H1134.45V247.4H1134.73V176.2H1135.01V176.2H1135.29V176.1H1135.57V176.0H1135.85V175.9H1136.13V175.9H1136.41V249.4H1136.69V249.3H1136.97V249.2H1137.25V249.2H1137.53V249.1H1137.81V249.1H1138.09V249.0H1138.37V248.9H1138.65V152.7H1138.93V152.6H1139.21V152.5H1139.49V152.5H1139.77V152.4H1140.05V228.9H1140.33V228.9H1140.61V228.8H1140.89V228.7H1141.17V228.7H1141.45V228.6H1141.73V228.6H1142.01V198.5H1142.29V198.4H1142.57V198.3H1142.85V198.3H1143.12V198.2H1143.40V195.5H1143.68V195.4H1143.96V195.4H1144.24V195.3H1144.52V195.2H1144.80V195.2H1145.08V196.9H1145.36V196.8H1145.64V196.7H1145.92V196.7H1146.20V196.6H1146.48V196.6H1146.76V133.5H1148.44V169.9H1148.72V169.8H1149.00V169.8H1149.28V169.7H1149.56V169.6H1149.84V183.6H1150.12V183.5H1150.40V183.5H1150.68V183.4H1150.96V183.3H1151.24V183.3H1151.52V183.2H1151.80V183.1H1152.08V208.6H1152.36V208.6H1152.64V208.5H1152.92V208.5H1153.20V208.4H1153.48V208.4H1153.75V208.3H1154.03V208.2H1154.31V160.3H1154.59V160.2H1154.87V160.1H1155.15V160.1H1155.43V160.0H1155.71V204.1H1155.99V204.1H1156.27V204.0H1156.55V204.0H1156.83V255.3H1157.11V255.2H1157.39V255.2H1157.67V255.1H1157.95V255.1H1158.23V255.0H1158.51V235.9H1158.79V235.9H1159.07V235.8H1159.35V235.8H1159.63V235.7H1159.91V148.0H1160.19V147.9H1160.47V147.9H1160.75V147.8H1161.03V147.7H1161.31V147.7H1161.59V157.3H1161.87V157.3H1162.15V157.2H1162.43V157.1H1162.71V157.1H1162.99V157.0H1163.27V156.9H1163.55V156.9H1163.83V217.1H1165.78V179.4H1166.06V179.4H1166.34V179.3H1166.62V179.2H1166.90V179.2H1167.18V179.1H1167.46V179.1H1167.74V179.0H1168.02V155.9H1168.30V155.9H1168.58V155.8H1168.86V155.7H1169.14V155.7H1169.42V155.6H1169.70V215.1H1169.98V215.0H1170.26V215.0H1170.54V214.9H1170.82V214.9H1171.10V159.1H1171.38V159.0H1171.66V159.0H1171.94V158.9H1172.22V158.8H1172.50V184.3H1172.78V184.3H1173.06V184.2H1173.34V184.2H1173.62V184.1H1173.90V184.1H1174.18V184.0H1174.46V184.0H1174.74V195.8H1175.02V195.7H1175.29V195.7H1175.57V195.6H1175.85V195.6H1176.13V195.5H1176.41V195.5H1176.69V195.4H1176.97V186.1H1177.25V186.0H1177.53V186.0H1177.81V185.9H1178.09V185.9H1178.37V185.8H1178.65V190.1H1178.93V190.0H1179.21V190.0H1179.49V189.9H1179.77V189.9H1180.05V189.8H1180.33V189.8H1180.61V186.7H1182.29V170.8H1182.57V170.7H1182.85V170.7H1183.13V170.6H1183.41V157.3H1183.69V157.2H1183.97V157.2H1184.25V157.1H1184.53V157.1H1184.81V157.0H1185.09V157.0H1185.37V164.3H1185.65V164.3H1185.93V164.2H1186.20V164.2H1186.48V164.1H1186.76V164.1H1187.04V164.0H1187.32V164.0H1187.60V219.4H1187.88V219.4H1188.16V219.3H1188.44V219.3H1188.72V106.6H1189.00V106.6H1189.28V106.5H1189.56V106.4H1189.84V106.4H1190.12V237.2H1190.40V237.2H1190.68V237.1H1190.96V237.1H1191.24V171.4H1191.52V171.3H1191.80V171.3H1192.08V171.2H1192.36V171.2H1192.64V171.1H1192.92V171.1H1193.20V171.0H1193.48V171.0H1193.76V170.9H1194.04V128.6H1194.32V128.6H1194.60V128.5H1194.88V128.5H1195.16V128.4H1195.44V214.5H1195.72V214.4H1196.00V214.4H1196.28V214.4H1196.56V214.3H1196.83V100.2H1197.11V100.2H1197.39V100.1H1197.67V100.1H1197.95V100.0H1198.23V171.5H1199.63V156.0H1199.91V156.0H1200.19V155.9H1200.47V155.9H1200.75V198.9H1201.03V198.8H1201.31V198.8H1201.59V198.7H1201.87V198.7H1202.15V141.6H1202.43V141.6H1202.71V141.6H1202.99V141.5H1203.27V141.5H1203.55V163.6H1203.83V163.5H1204.11V163.5H1204.39V163.4H1204.67V175.5H1204.95V175.4H1205.23V175.4H1205.51V175.3H1205.79V175.3H1206.07V175.3H1206.35V175.2H1206.63V191.5H1206.91V191.4H1207.19V191.4H1207.47V191.3H1207.74V191.3H1208.02V191.3H1208.30V191.2H1208.58V191.2H1208.86V131.1H1209.14V131.1H1209.42V131.1H1209.70V131.0H1209.98V131.0H1210.26V150.1H1210.54V150.0H1210.82V150.0H1211.10V149.9H1211.38V149.9H1211.66V203.4H1211.94V203.4H1212.22V203.3H1212.50V203.3H1212.78V203.3H1213.06V203.2H1213.34V203.2H1213.62V119.5H1213.90V119.5H1214.18V119.4H1214.46V119.4H1214.74V179.3H1215.02V175.3H1216.14V215.4H1216.42V215.4H1216.70V215.4H1216.98V215.3H1217.26V215.3H1217.54V215.3H1217.82V215.2H1218.10V215.2H1218.37V170.7H1218.65V170.6H1218.93V170.6H1219.21V170.5H1219.49V170.5H1219.77V170.5H1220.05V168.8H1220.33V168.8H1220.61V168.7H1220.89V168.7H1221.17V168.7H1221.45V168.6H1221.73V168.6H1222.01V168.6H1222.29V134.1H1222.57V134.1H1222.85V134.1H1223.13V134.0H1223.41V134.0H1223.69V183.3H1223.97V183.3H1224.25V183.2H1224.53V183.2H1224.81V183.2H1225.09V207.6H1225.37V207.5H1225.65V207.5H1225.93V207.5H1226.21V207.4H1226.49V207.4H1226.77V156.8H1227.05V156.8H1227.33V156.7H1227.61V156.7H1227.89V156.7H1228.17V233.1H1228.45V233.0H1228.73V233.0H1229.01V233.0H1229.28V233.0H1229.56V232.9H1229.84V232.9H1230.12V232.9H1230.40V132.4H1230.68V132.4H1230.96V132.3H1231.24V132.3H1231.52V132.3H1231.80V198.1H1232.92V123.8H1233.20V123.7H1233.48V123.7H1233.76V123.7H1234.04V123.6H1234.32V123.6H1234.60V123.6H1234.88V123.5H1235.16V155.6H1235.44V155.5H1235.72V155.5H1236.00V155.5H1236.28V162.7H1236.56V162.7H1236.84V162.7H1237.12V162.6H1237.40V162.6H1237.68V162.6H1237.96V162.5H1238.24V109.6H1238.52V109.6H1238.80V109.6H1239.08V109.5H1239.36V109.5H1239.64V175.0H1239.91V175.0H1240.19V175.0H1240.47V175.0H1240.75V174.9H1241.03V174.9H1241.31V209.3H1241.59V209.3H1241.87V209.3H1242.15V209.2H1242.43V209.2H1242.71V209.2H1242.99V173.9H1243.27V173.8H1243.55V173.8H1243.83V173.8H1244.11V173.8H1244.39V173.7H1244.67V173.7H1244.95V173.7H1245.23V139.6H1245.51V139.6H1245.79V139.5H1246.07V139.5H1246.35V139.5H1246.63V139.5H1246.91V139.4H1247.19V139.4H1247.47V188.4H1247.75V188.4H1248.03V188.4H1248.31V188.4H1248.59V188.3H1248.87V188.3H1249.15V171.5H1250.27V150.2H1250.54V150.2H1250.82V150.1H1251.10V150.1H1251.38V169.3H1251.66V169.3H1251.94V169.3H1252.22V169.2H1252.50V169.2H1252.78V187.2H1253.06V187.1H1253.34V187.1H1253.62V187.1H1253.90V187.1H1254.18V187.0H1254.46V187.0H1254.74V187.0H1255.02V159.9H1255.30V159.8H1255.58V159.8H1255.86V159.8H1256.14V159.8H1256.42V159.7H1256.70V114.4H1256.98V114.4H1257.26V114.4H1257.54V114.4H1257.82V114.3H1258.10V114.3H1258.38V217.8H1258.66V217.8H1258.94V217.7H1259.22V217.7H1259.50V217.7H1259.78V217.7H1260.06V217.7H1260.34V217.6H1260.62V110.0H1260.90V110.0H1261.18V110.0H1261.45V110.0H1261.73V109.9H1262.01V109.9H1262.29V140.2H1262.57V140.2H1262.85V140.2H1263.13V140.2H1263.41V140.1H1263.69V140.1H1263.97V176.7H1264.25V176.6H1264.53V176.6H1264.81V176.6H1265.09V153.8H1265.37V133.5H1266.49V118.7H1266.77V118.7H1267.05V118.7H1267.33V118.7H1267.61V118.7H1267.89V118.6H1268.17V118.6H1268.45V118.6H1268.73V177.1H1269.01V177.0H1269.29V177.0H1269.57V177.0H1269.85V177.0H1270.13V177.0H1270.41V177.0H1270.69V156.6H1270.97V156.5H1271.25V156.5H1271.53V156.5H1271.81V156.5H1272.08V204.8H1272.36V204.7H1272.64V204.7H1272.92V204.7H1273.20V204.7H1273.48V204.7H1273.76V204.7H1274.04V101.1H1274.32V101.1H1274.60V101.0H1274.88V101.0H1275.16V185.6H1275.44V185.5H1275.72V185.5H1276.00V185.5H1276.28V185.5H1276.56V138.8H1276.84V138.8H1277.12V138.8H1277.40V138.7H1277.68V138.7H1277.96V172.1H1278.24V172.1H1278.52V172.1H1278.80V172.0H1279.08V172.0H1279.36V172.0H1279.64V172.0H1279.92V196.9H1280.20V196.8H1280.48V196.8H1280.76V196.8H1281.04V196.8H1281.32V196.8H1281.60V196.8H1281.88V196.8H1282.16V178.0H1282.44V178.0H1282.72V178.0H1282.99V125.9H1284.39V170.5H1284.67V170.5H1284.95V170.5H1285.23V170.4H1285.51V177.9H1285.79V177.9H1286.07V177.9H1286.35V177.9H1286.63V177.9H1286.91V177.9H1287.19V177.9H1287.47V177.9H1287.75V141.4H1288.03V141.3H1288.31V141.3H1288.59V141.3H1288.87V141.3H1289.15V141.3H1289.43V169.2H1289.71V169.2H1289.99V169.2H1290.27V169.2H1290.55V169.2H1290.83V169.1H1291.11V169.1H1291.39V169.1H1291.67V122.7H1291.95V122.7H1292.23V122.7H1292.51V122.7H1292.79V122.7H1293.07V122.7H1293.35V244.0H1293.62V244.0H1293.90V244.0H1294.18V244.0H1294.46V108.9H1294.74V108.9H1295.02V108.9H1295.30V108.9H1295.58V108.9H1295.86V129.5H1296.14V129.5H1296.42V129.5H1296.70V129.5H1296.98V161.3H1297.26V161.3H1297.54V161.3H1297.82V161.3H1298.10V161.3H1298.38V161.3H1298.66V200.5H1298.94V200.5H1299.22V200.5H1299.50V200.4H1299.78V200.4H1300.06V200.4H1300.34V182.9H1301.74V125.8H1302.02V125.8H1302.30V125.7H1302.58V223.9H1302.86V223.9H1303.14V223.9H1303.42V223.9H1303.70V223.9H1303.98V223.9H1304.26V223.9H1304.53V169.4H1304.81V169.4H1305.09V169.4H1305.37V169.4H1305.65V169.4H1305.93V169.4H1306.21V169.4H1306.49V169.4H1306.77V156.7H1307.05V156.7H1307.33V156.7H1307.61V156.7H1307.89V156.7H1308.17V156.7H1308.45V156.7H1308.73V156.7H1309.01V271.8H1309.29V271.8H1309.57V271.8H1309.85V271.8H1310.13V271.8H1310.41V107.3H1310.69V107.3H1310.97V107.3H1311.25V107.3H1311.53V107.3H1311.81V107.3H1312.09V107.3H1312.37V203.2H1312.65V203.2H1312.93V203.2H1313.21V203.2H1313.49V203.2H1313.77V133.9H1314.05V133.9H1314.33V133.9H1314.61V133.9H1314.89V133.9H1315.16V218.0H1315.44V218.0H1315.72V218.0H1316.00V218.0H1316.28V218.0H1316.56V218.0H1316.84V218.0H1317.12V218.0H1317.40V137.3H1318.80V150.3H1319.08V150.3H1319.36V207.5H1319.64V207.5H1319.92V207.5H1320.20V207.5H1320.48V207.5H1320.76V207.5H1321.04V97.0H1321.32V97.0H1321.60V97.0H1321.88V97.0H1322.16V97.0H1322.44V97.0H1322.72V97.0H1323.00V97.0H1323.28V251.5H1323.56V251.5H1323.84V251.5H1324.12V251.5H1324.40V251.5H1324.68V251.5H1324.96V180.7H1325.24V180.7H1325.52V180.7H1325.80V180.7H1326.07V180.7H1326.35V180.7H1326.63V180.7H1326.91V180.7H1327.19V93.9H1327.47V93.9H1327.75V93.9H1328.03V93.9H1328.31V93.9H1328.59V93.9H1328.87V205.9H1329.15V205.9H1329.43V205.9H1329.71V205.9H1329.99V205.9H1330.27V205.9H1330.55V174.4H1330.83V174.4H1331.11V174.4H1331.39V174.4H1331.67V174.4H1331.95V174.4H1332.23V174.4H1332.51V174.4H1332.79V231.9H1333.07V231.9H1333.35V231.9H1333.63V231.9H1333.91V194.3H1335.59V252.8H1335.87V252.8H1336.15V252.9H1336.43V252.9H1336.70V252.9H1336.98V252.9H1337.26V252.9H1337.54V252.9H1337.82V159.6H1338.10V159.6H1338.38V159.6H1338.66V159.7H1338.94V172.0H1339.22V172.0H1339.50V172.0H1339.78V172.1H1340.06V172.1H1340.34V172.1H1340.62V156.8H1340.90V156.8H1341.18V156.8H1341.46V156.8H1341.74V156.8H1342.02V156.8H1342.30V126.8H1342.58V126.8H1342.86V126.8H1343.14V126.8H1343.42V126.8H1343.70V126.8H1343.98V126.8H1344.26V151.8H1344.54V151.8H1344.82V151.8H1345.10V151.8H1345.38V151.8H1345.66V151.8H1345.94V214.5H1346.22V214.6H1346.50V214.6H1346.78V214.6H1347.06V214.6H1347.34V162.6H1347.61V162.7H1347.89V162.7H1348.17V162.7H1348.45V160.3H1348.73V160.3H1349.01V160.3H1349.29V160.3H1349.57V160.3H1349.85V160.3H1350.13V170.6H1350.41V170.6H1350.69V163.9H1352.37V228.7H1352.65V228.7H1352.93V228.7H1353.21V228.7H1353.49V112.6H1353.77V112.7H1354.05V112.7H1354.33V112.7H1354.61V112.7H1354.89V205.3H1355.17V205.3H1355.45V205.3H1355.73V205.3H1356.01V205.3H1356.29V205.3H1356.57V205.3H1356.85V163.0H1357.13V163.0H1357.41V163.0H1357.69V163.0H1357.97V163.0H1358.24V163.0H1358.52V157.9H1358.80V157.9H1359.08V157.9H1359.36V157.9H1359.64V157.9H1359.92V157.9H1360.20V157.9H1360.48V138.3H1360.76V138.3H1361.04V138.3H1361.32V138.3H1361.60V181.3H1361.88V181.3H1362.16V181.3H1362.44V181.3H1362.72V181.3H1363.00V168.4H1363.28V168.4H1363.56V168.4H1363.84V168.4H1364.12V168.4H1364.40V168.4H1364.68V168.5H1364.96V127.0H1365.24V127.0H1365.52V127.0H1365.80V127.1H1366.08V127.1H1366.36V127.1H1366.64V127.1H1366.92V131.6H1367.20V131.6H1367.48V131.6H1367.76V87.9H1369.15V177.0H1369.43V177.0H1369.71V177.1H1369.99V177.1H1370.27V161.2H1370.55V161.2H1370.83V161.2H1371.11V161.2H1371.39V256.0H1371.67V256.0H1371.95V256.0H1372.23V256.0H1372.51V256.1H1372.79V256.1H1373.07V256.1H1373.35V137.2H1373.63V137.3H1373.91V137.3H1374.19V137.3H1374.47V137.3H1374.75V232.9H1375.03V232.9H1375.31V232.9H1375.59V232.9H1375.87V232.9H1376.15V232.9H1376.43V164.9H1376.71V165.0H1376.99V165.0H1377.27V165.0H1377.55V165.0H1377.83V165.0H1378.11V165.1H1378.39V165.1H1378.67V128.0H1378.95V128.0H1379.23V128.0H1379.51V128.0H1379.78V172.9H1380.06V172.9H1380.34V172.9H1380.62V172.9H1380.90V173.0H1381.18V176.4H1381.46V176.4H1381.74V176.4H1382.02V176.4H1382.30V176.4H1382.58V176.5H1382.86V176.5H1383.14V187.1H1383.42V187.1H1383.70V187.1H1383.98V187.1H1384.26V170.9H1384.54V171.0H1384.82V171.0H1385.10V171.0H1385.38V137.3H1386.78V161.6H1387.06V161.7H1387.34V161.7H1387.62V161.7H1387.90V161.7H1388.18V161.8H1388.46V161.8H1388.74V161.8H1389.02V122.0H1389.30V122.0H1389.58V122.1H1389.86V122.1H1390.14V185.0H1390.41V185.0H1390.69V185.1H1390.97V185.1H1391.25V185.1H1391.53V185.1H1391.81V183.3H1392.09V183.3H1392.37V183.4H1392.65V183.4H1392.93V183.4H1393.21V183.4H1393.49V183.5H1393.77V242.6H1394.05V242.6H1394.33V242.7H1394.61V242.7H1394.89V113.8H1395.17V113.9H1395.45V113.9H1395.73V113.9H1396.01V113.9H1396.29V114.0H1396.57V224.0H1396.85V224.0H1397.13V224.1H1397.41V224.1H1397.69V224.1H1397.97V224.1H1398.25V128.5H1398.53V128.5H1398.81V128.5H1399.09V128.6H1399.37V128.6H1399.65V191.2H1399.93V191.3H1400.21V191.3H1400.49V191.3H1400.77V163.4H1401.05V163.4H1401.32V163.5H1401.60V163.5H1401.88V163.5H1402.16V163.6H1402.44V201.9H1403.56V141.5H1403.84V215.2H1404.12V215.2H1404.40V215.2H1404.68V215.2H1404.96V215.3H1405.24V215.3H1405.52V152.9H1405.80V152.9H1406.08V152.9H1406.36V153.0H1406.64V176.9H1406.92V176.9H1407.20V177.0H1407.48V177.0H1407.76V177.0H1408.04V177.0H1408.32V143.4H1408.60V143.4H1408.88V143.5H1409.16V143.5H1409.44V143.5H1409.72V226.5H1410.00V226.5H1410.28V226.5H1410.56V226.6H1410.84V105.8H1411.12V105.8H1411.40V105.9H1411.68V105.9H1411.95V105.9H1412.23V106.0H1412.51V106.0H1412.79V214.9H1413.07V214.9H1413.35V214.9H1413.63V215.0H1413.91V175.6H1414.19V175.6H1414.47V175.7H1414.75V175.7H1415.03V175.7H1415.31V175.8H1415.59V175.8H1415.87V175.8H1416.15V164.0H1416.43V164.1H1416.71V164.1H1416.99V164.1H1417.27V164.2H1417.55V164.2H1417.83V197.8H1418.11V197.8H1418.39V197.8H1418.67V197.8H1418.95V114.5H1420.07V162.6H1420.35V162.7H1420.63V162.7H1420.91V162.7H1421.19V205.2H1421.47V205.2H1421.75V205.3H1422.03V205.3H1422.31V107.2H1422.59V107.2H1422.86V107.3H1423.14V107.3H1423.42V257.3H1423.70V257.3H1423.98V257.4H1424.26V257.4H1424.54V257.4H1424.82V125.7H1425.10V125.8H1425.38V125.8H1425.66V125.8H1425.94V189.9H1426.22V189.9H1426.50V190.0H1426.78V190.0H1427.06V190.0H1427.34V190.1H1427.62V190.1H1427.90V190.1H1428.18V126.5H1428.46V126.5H1428.74V126.5H1429.02V126.6H1429.30V126.6H1429.58V126.7H1429.86V126.7H1430.14V187.3H1430.42V187.4H1430.70V187.4H1430.98V187.4H1431.26V187.5H1431.54V187.5H1431.82V187.5H1432.10V187.6H1432.38V239.5H1432.66V239.5H1432.94V239.6H1433.22V239.6H1433.49V239.6H1433.77V239.7H1434.05V239.7H1434.33V117.0H1434.61V117.0H1434.89V117.1H1435.17V117.1H1435.45V117.2H1435.73V117.2H1436.01V117.2H1436.29V117.3H1436.57V217.1H1437.69V198.5H1437.97V198.5H1438.25V160.7H1438.53V160.7H1438.81V160.7H1439.09V160.8H1439.37V116.2H1439.65V116.2H1439.93V116.3H1440.21V116.3H1440.49V116.4H1440.77V116.4H1441.05V116.5H1441.33V116.5H1441.61V173.3H1441.89V173.3H1442.17V173.4H1442.45V173.4H1442.73V173.5H1443.01V173.5H1443.29V173.5H1443.57V185.3H1443.85V185.3H1444.13V185.3H1444.40V185.4H1444.68V185.4H1444.96V157.0H1445.24V157.0H1445.52V157.1H1445.80V157.1H1446.08V157.2H1446.36V233.6H1446.64V233.6H1446.92V233.7H1447.20V233.7H1447.48V81.5H1447.76V81.6H1448.04V81.6H1448.32V81.7H1448.60V81.7H1448.88V81.8H1449.16V266.6H1449.44V266.6H1449.72V266.7H1450.00V266.7H1450.28V266.7H1450.56V266.8H1450.84V266.8H1451.12V266.8H1451.40V79.4H1451.68V79.4H1451.96V79.5H1452.24V79.5H1452.52V79.6H1452.80V79.7H1453.08V79.7H1453.36V79.8H1453.64V175.3H1455.03V250.1H1455.31V162.2H1455.59V162.3H1455.87V162.3H1456.15V162.4H1456.43V162.4H1456.71V182.7H1456.99V182.8H1457.27V182.8H1457.55V182.9H1457.83V241.2H1458.11V241.2H1458.39V241.3H1458.67V241.3H1458.95V241.3H1459.23V241.4H1459.51V241.4H1459.79V82.5H1460.07V82.6H1460.35V82.6H1460.63V82.7H1460.91V82.8H1461.19V82.8H1461.47V82.9H1461.75V206.1H1462.03V206.1H1462.31V206.2H1462.59V206.2H1462.87V126.3H1463.15V126.4H1463.43V126.5H1463.71V126.5H1463.99V126.6H1464.27V126.6H1464.55V126.7H1464.83V126.8H1465.11V184.6H1465.39V184.6H1465.67V184.7H1465.94V184.7H1466.22V184.8H1466.50V184.8H1466.78V229.7H1467.06V229.8H1467.34V229.8H1467.62V229.8H1467.90V229.9H1468.18V229.9H1468.46V141.4H1468.74V141.5H1469.02V141.5H1469.30V141.6H1469.58V141.7H1469.86V141.7H1470.14V190.5H1471.54V202.6H1471.82V202.6H1472.10V202.7H1472.38V113.8H1472.66V113.8H1472.94V113.9H1473.22V114.0H1473.50V114.0H1473.78V114.1H1474.06V114.2H1474.34V213.6H1474.62V213.6H1474.90V213.7H1475.18V213.8H1475.46V164.0H1475.74V164.0H1476.02V164.1H1476.30V164.1H1476.57V164.2H1476.85V164.3H1477.13V161.6H1477.41V161.7H1477.69V161.7H1477.97V161.8H1478.25V161.9H1478.53V161.9H1478.81V235.5H1479.09V235.5H1479.37V235.6H1479.65V235.6H1479.93V101.3H1480.21V101.4H1480.49V101.4H1480.77V101.5H1481.05V199.7H1481.33V199.7H1481.61V199.8H1481.89V199.8H1482.17V199.9H1482.45V200.0H1482.73V200.0H1483.01V200.1H1483.29V197.2H1483.57V197.3H1483.85V197.4H1484.13V197.4H1484.41V197.5H1484.69V197.5H1484.97V243.4H1485.25V243.5H1485.53V243.5H1485.81V243.6H1486.09V243.6H1486.37V243.7H1486.65V243.7H1486.93V167.7H1488.88V103.8H1489.16V227.7H1489.44V227.8H1489.72V227.8H1490.00V227.9H1490.28V227.9H1490.56V228.0H1490.84V182.4H1491.12V182.5H1491.40V182.5H1491.68V182.6H1491.96V182.7H1492.24V182.7H1492.52V182.8H1492.80V190.8H1493.08V190.9H1493.36V190.9H1493.64V191.0H1493.92V194.9H1494.20V194.9H1494.48V195.0H1494.76V195.0H1495.04V195.1H1495.32V195.2H1495.60V206.6H1495.88V206.6H1496.16V206.7H1496.44V206.8H1496.72V206.8H1497.00V206.9H1497.28V207.0H1497.56V207.0H1497.84V128.0H1498.11V128.0H1498.39V128.1H1498.67V128.2H1498.95V128.3H1499.23V128.4H1499.51V234.9H1499.79V235.0H1500.07V235.1H1500.35V235.1H1500.63V126.1H1500.91V126.2H1501.19V126.3H1501.47V126.4H1501.75V126.5H1502.03V126.5H1502.31V126.6H1502.59V126.7H1502.87V265.4H1503.15V265.4H1503.43V265.5H1503.71V265.6H1503.99V265.6H1504.27V265.7H1504.55V209.5H1505.67V162.4H1505.95V162.5H1506.23V162.6H1506.51V162.6H1506.79V197.2H1507.07V197.3H1507.35V197.3H1507.63V197.4H1507.91V197.5H1508.19V197.5H1508.47V197.6H1508.74V197.7H1509.02V213.8H1509.30V213.9H1509.58V214.0H1509.86V214.1H1510.14V214.1H1510.42V214.2H1510.70V168.5H1510.98V168.5H1511.26V168.6H1511.54V168.7H1511.82V168.8H1512.10V168.9H1512.38V168.9H1512.66V256.5H1512.94V256.6H1513.22V256.7H1513.50V256.7H1513.78V256.8H1514.06V222.1H1514.34V222.2H1514.62V222.3H1514.90V222.3H1515.18V222.4H1515.46V222.5H1515.74V230.7H1516.02V230.8H1516.30V230.9H1516.58V230.9H1516.86V231.0H1517.14V231.1H1517.42V231.1H1517.70V158.6H1517.98V158.7H1518.26V158.8H1518.54V158.9H1518.82V159.0H1519.10V159.0H1519.38V159.1H1519.65V159.2H1519.93V184.3H1520.21V184.3H1520.49V184.4H1520.77V184.5H1521.05V217.1H1522.73V186.1H1523.01V186.1H1523.29V186.2H1523.57V186.3H1523.85V186.4H1524.13V186.5H1524.41V186.6H1524.69V186.6H1524.97V216.5H1525.25V216.6H1525.53V216.7H1525.81V216.7H1526.09V216.8H1526.37V216.9H1526.65V144.5H1526.93V144.6H1527.21V144.7H1527.49V144.8H1527.77V248.0H1528.05V248.0H1528.33V248.1H1528.61V248.2H1528.89V248.2H1529.17V153.1H1529.45V153.2H1529.73V153.3H1530.01V153.4H1530.28V153.5H1530.56V153.5H1530.84V153.6H1531.12V231.3H1531.40V231.4H1531.68V231.5H1531.96V231.6H1532.24V231.6H1532.52V231.7H1532.80V140.9H1533.08V141.0H1533.36V141.1H1533.64V141.2H1533.92V267.4H1534.20V267.4H1534.48V267.5H1534.76V267.6H1535.04V267.7H1535.32V194.6H1535.60V194.7H1535.88V194.8H1536.16V194.9H1536.44V194.9H1536.72V194.1H1537.00V194.2H1537.28V194.3H1537.56V194.4H1537.84V228.5H1539.52V220.6H1539.80V220.7H1540.08V220.8H1540.36V220.9H1540.64V221.0H1540.92V221.0H1541.19V221.1H1541.47V151.9H1541.75V152.0H1542.03V152.1H1542.31V152.2H1542.59V152.3H1542.87V152.4H1543.15V152.6H1543.43V152.7H1543.71V189.5H1543.99V189.6H1544.27V189.7H1544.55V189.8H1544.83V189.9H1545.11V190.0H1545.39V246.0H1545.67V246.1H1545.95V246.2H1546.23V246.2H1546.51V246.3H1546.79V246.4H1547.07V246.5H1547.35V159.4H1547.63V159.6H1547.91V159.7H1548.19V159.8H1548.47V159.9H1548.75V214.9H1549.03V215.0H1549.31V215.1H1549.59V215.2H1549.87V142.9H1550.15V143.0H1550.43V143.1H1550.71V143.2H1550.99V261.8H1551.27V261.8H1551.55V261.9H1551.82V262.0H1552.10V262.1H1552.38V262.2H1552.66V262.2H1552.94V262.3H1553.22V203.0H1553.50V203.1H1553.78V203.2H1554.06V203.3H1554.34V203.4H1554.62V203.5H1554.90V243.7H1556.30V180.6H1556.58V180.7H1556.86V180.8H1557.14V180.9H1557.42V181.0H1557.70V181.1H1557.98V181.2H1558.26V181.3H1558.54V213.7H1558.82V213.8H1559.10V213.9H1559.38V214.0H1559.66V214.1H1559.94V230.1H1560.22V230.2H1560.50V230.3H1560.78V230.3H1561.06V230.4H1561.34V230.5H1561.62V230.6H1561.90V230.7H1562.18V145.7H1562.46V145.8H1562.73V145.9H1563.01V146.1H1563.29V146.2H1563.57V225.4H1563.85V225.5H1564.13V225.6H1564.41V225.7H1564.69V205.6H1564.97V205.8H1565.25V205.9H1565.53V206.0H1565.81V221.6H1566.09V221.7H1566.37V221.8H1566.65V221.9H1566.93V222.0H1567.21V168.7H1567.49V168.9H1567.77V169.0H1568.05V169.1H1568.33V169.2H1568.61V169.3H1568.89V169.5H1569.17V169.6H1569.45V167.8H1569.73V167.9H1570.01V168.1H1570.29V168.2H1570.57V168.3H1570.85V168.4H1571.13V168.5H1571.41V240.7H1571.69V240.8H1571.97V240.9H1572.25V241.0H1572.53V217.1H1573.64V230.9H1573.92V231.0H1574.20V231.1H1574.48V231.2H1574.76V231.3H1575.04V231.4H1575.32V231.5H1575.60V231.6H1575.88V198.3H1576.16V198.5H1576.44V198.6H1576.72V198.7H1577.00V250.9H1577.28V251.0H1577.56V251.1H1577.84V251.2H1578.12V174.4H1578.40V174.5H1578.68V174.7H1578.96V174.8H1579.24V258.5H1579.52V258.6H1579.80V258.7H1580.08V258.8H1580.36V173.8H1580.64V173.9H1580.92V174.0H1581.20V174.2H1581.48V174.3H1581.76V174.4H1582.04V174.6H1582.32V180.4H1582.60V180.5H1582.88V180.6H1583.16V180.8H1583.44V215.2H1583.72V215.3H1584.00V215.4H1584.27V215.6H1584.55V215.7H1584.83V215.8H1585.11V215.9H1585.39V216.0H1585.67V235.2H1585.95V235.3H1586.23V235.4H1586.51V235.5H1586.79V216.0H1587.07V216.1H1587.35V216.2H1587.63V216.4H1587.91V216.5H1588.19V216.6H1588.47V216.7H1588.75V209.5H1589.87V184.3H1590.15V184.5H1590.43V184.6H1590.71V184.7H1590.99V226.7H1591.27V226.8H1591.55V226.9H1591.83V227.1H1592.11V188.5H1592.39V188.6H1592.67V188.8H1592.95V188.9H1593.23V189.0H1593.51V232.3H1593.79V232.4H1594.07V232.5H1594.35V232.6H1594.63V232.7H1594.90V232.9H1595.18V182.2H1595.46V182.4H1595.74V182.5H1596.02V182.7H1596.30V182.8H1596.58V183.0H1596.86V183.1H1597.14V265.9H1597.42V266.0H1597.70V266.1H1597.98V266.3H1598.26V266.4H1598.54V266.5H1598.82V194.1H1599.10V194.3H1599.38V194.4H1599.66V194.5H1599.94V194.7H1600.22V194.8H1600.50V195.0H1600.78V221.9H1601.06V222.0H1601.34V222.2H1601.62V222.3H1601.90V222.4H1602.18V227.1H1602.46V227.2H1602.74V227.3H1603.02V227.5H1603.30V227.6H1603.58V227.7H1603.86V227.9H1604.14V207.6H1604.42V207.7H1604.70V207.9H1604.98V208.0H1605.26V208.2H1605.54V208.3H1605.81V266.6H1606.09V220.9H1607.77V232.2H1608.05V232.3H1608.33V232.5H1608.61V232.6H1608.89V263.6H1609.17V263.7H1609.45V263.8H1609.73V263.9H1610.01V264.1H1610.29V264.2H1610.57V264.3H1610.85V240.8H1611.13V241.0H1611.41V241.1H1611.69V241.2H1611.97V241.4H1612.25V241.5H1612.53V243.9H1612.81V244.1H1613.09V244.2H1613.37V244.3H1613.65V244.5H1613.93V244.6H1614.21V244.7H1614.49V244.9H1614.77V216.8H1615.05V217.0H1615.33V217.1H1615.61V217.3H1615.89V217.4H1616.17V217.6H1616.44V235.1H1616.72V235.3H1617.00V235.4H1617.28V235.6H1617.56V235.7H1617.84V235.8H1618.12V236.0H1618.40V239.5H1618.68V239.6H1618.96V239.8H1619.24V239.9H1619.52V236.1H1619.80V236.3H1620.08V236.4H1620.36V236.5H1620.64V236.7H1620.92V236.8H1621.20V237.0H1621.48V237.1H1621.76V259.4H1622.04V259.6H1622.32V209.5H1624.00V263.8H1624.28V263.9H1624.56V264.0H1624.84V264.2H1625.12V264.3H1625.40V264.4H1625.68V264.6H1625.96V264.7H1626.24V209.1H1626.52V209.2H1626.80V209.4H1627.08V209.6H1627.35V209.7H1627.63V209.9H1627.91V210.1H1628.19V210.2H1628.47V230.9H1628.75V231.1H1629.03V231.2H1629.31V231.4H1629.59V231.6H1629.87V231.7H1630.15V189.4H1630.43V189.6H1630.71V189.8H1630.99V190.0H1631.27V190.2H1631.55V190.4H1631.83V190.5H1632.11V190.7H1632.39V235.8H1632.67V235.9H1632.95V236.1H1633.23V236.2H1633.51V236.4H1633.79V236.6H1634.07V236.7H1634.35V236.9H1634.63V241.1H1634.91V241.3H1635.19V241.5H1635.47V241.6H1635.75V267.7H1636.03V267.9H1636.31V268.0H1636.59V268.2H1636.87V268.3H1637.15V268.5H1637.43V268.6H1637.71V268.8H1637.98V219.7H1638.26V219.9H1638.54V220.1H1638.82V220.2H1639.10V263.3H1639.38V263.5H1639.66V263.6H1639.94V228.5H1641.34V152.0H1641.62V152.2H1641.90V152.4H1642.18V152.7H1642.46V152.9H1642.74V153.1H1643.02V318.8H1643.30V318.9H1643.58V319.1H1643.86V319.2H1644.14V319.3H1644.42V181.1H1644.70V181.3H1644.98V181.5H1645.26V181.7H1645.54V181.9H1645.82V182.1H1646.10V248.0H1646.38V248.1H1646.66V248.3H1646.94V248.5H1647.22V248.6H1647.50V248.8H1647.78V249.0H1648.06V212.9H1648.34V213.1H1648.62V213.3H1648.89V213.5H1649.17V213.7H1649.45V213.9H1649.73V246.4H1650.01V246.5H1650.29V246.7H1650.57V246.9H1650.85V247.1H1651.13V247.3H1651.41V247.4H1651.69V247.6H1651.97V257.7H1652.25V257.9H1652.53V258.1H1652.81V258.2H1653.09V258.4H1653.37V258.6H1653.65V258.8H1653.93V238.6H1654.21V238.8H1654.49V239.0H1654.77V239.2H1655.05V239.4H1655.33V239.6H1655.61V239.8H1655.89V233.3H1656.17V233.5H1656.45V233.7H1656.73V300.7H1657.85V201.6H1658.13V201.8H1658.41V202.0H1658.69V202.3H1658.97V261.9H1659.25V262.0H1659.52V262.2H1659.80V262.4H1660.08V262.6H1660.36V260.1H1660.64V260.3H1660.92V260.5H1661.20V260.7H1661.48V247.7H1661.76V247.9H1662.04V248.1H1662.32V248.3H1662.60V248.5H1662.88V248.7H1663.16V248.9H1663.44V274.2H1663.72V274.4H1664.00V274.6H1664.28V274.8H1664.56V266.8H1664.84V267.0H1665.12V267.2H1665.40V267.3H1665.68V267.5H1665.96V246.2H1666.24V246.4H1666.52V246.6H1666.80V246.8H1667.08V247.0H1667.36V244.4H1667.64V244.7H1667.92V244.9H1668.20V245.1H1668.48V245.3H1668.76V245.5H1669.04V296.7H1669.32V296.9H1669.60V297.1H1669.88V297.3H1670.15V297.5H1670.43V297.6H1670.71V297.8H1670.99V298.0H1671.27V242.1H1671.55V242.3H1671.83V242.5H1672.11V242.7H1672.39V243.0H1672.67V243.2H1672.95V243.4H1673.23V243.6H1673.51V276.0H1673.79V276.2H1674.07V276.4H1674.35V276.6H1674.63V266.5H1676.03V240.0H1676.31V240.3H1676.59V240.5H1676.87V273.8H1677.15V274.0H1677.43V274.2H1677.71V274.5H1677.99V274.7H1678.27V274.9H1678.55V311.7H1678.83V311.9H1679.11V312.0H1679.39V312.2H1679.67V312.4H1679.95V312.6H1680.23V312.8H1680.51V313.0H1680.79V256.3H1681.06V256.6H1681.34V256.8H1681.62V257.0H1681.90V257.2H1682.18V281.8H1682.46V282.0H1682.74V282.3H1683.02V282.5H1683.30V282.7H1683.58V282.9H1683.86V259.6H1684.14V259.8H1684.42V260.1H1684.70V260.3H1684.98V260.5H1685.26V260.8H1685.54V261.0H1685.82V284.5H1686.10V284.7H1686.38V284.9H1686.66V285.1H1686.94V285.3H1687.22V285.6H1687.50V285.8H1687.78V286.0H1688.06V279.7H1688.34V279.9H1688.62V280.2H1688.90V280.4H1689.18V280.6H1689.46V265.5H1689.74V265.8H1690.02V266.0H1690.30V266.3H1690.58V330.1H1690.86V304.5H1692.25V245.4H1692.53V245.6H1692.81V245.9H1693.09V246.2H1693.37V246.4H1693.65V246.7H1693.93V247.0H1694.21V247.2H1694.49V304.7H1694.77V304.9H1695.05V305.2H1695.33V305.4H1695.61V305.6H1695.89V258.8H1696.17V259.1H1696.45V259.3H1696.73V259.6H1697.01V259.8H1697.29V260.1H1697.57V260.4H1697.85V282.6H1698.13V282.9H1698.41V283.1H1698.69V283.3H1698.97V283.6H1699.25V283.8H1699.53V311.8H1699.81V312.0H1700.09V312.2H1700.37V312.4H1700.65V312.6H1700.93V312.9H1701.21V282.3H1701.49V282.6H1701.77V282.8H1702.05V283.1H1702.33V283.3H1702.60V283.6H1702.88V283.8H1703.16V328.1H1703.44V328.3H1703.72V328.5H1704.00V328.7H1704.28V328.9H1704.56V329.2H1704.84V329.4H1705.12V329.6H1705.40V286.8H1705.68V287.0H1705.96V287.3H1706.24V287.5H1706.52V306.1H1706.80V306.3H1707.08V306.6H1707.36V306.8H1707.64V307.1H1707.92V233.1H1708.20V233.4H1708.48V233.7H1708.76V234.0H1709.04V296.9H1710.16V348.0H1710.44V348.2H1710.72V320.9H1711.00V321.2H1711.28V321.4H1711.56V321.7H1711.84V319.6H1712.12V319.8H1712.40V320.1H1712.68V320.3H1712.96V338.8H1713.23V339.0H1713.51V339.2H1713.79V339.4H1714.07V339.7H1714.35V339.9H1714.63V340.1H1714.91V340.4H1715.19V294.0H1715.47V294.3H1715.75V294.6H1716.03V294.8H1716.31V295.1H1716.59V298.5H1716.87V298.8H1717.15V299.0H1717.43V299.3H1717.71V299.6H1717.99V299.9H1718.27V300.2H1718.55V300.4H1718.83V302.9H1719.11V303.2H1719.39V303.4H1719.67V303.7H1719.95V304.0H1720.23V304.3H1720.51V304.6H1720.79V307.1H1721.07V307.4H1721.35V307.7H1721.63V308.0H1721.91V315.4H1722.19V315.6H1722.47V315.9H1722.75V316.2H1723.03V324.9H1723.31V325.2H1723.59V325.5H1723.87V325.7H1724.14V326.0H1724.42V280.2H1724.70V280.6H1724.98V280.9H1725.26V281.2H1725.54V331.2H1727.22V335.9H1727.50V330.5H1727.78V330.8H1728.06V331.0H1728.34V331.3H1728.62V331.6H1728.90V331.9H1729.18V332.2H1729.46V330.7H1729.74V331.0H1730.02V331.3H1730.30V331.6H1730.58V331.9H1730.86V332.2H1731.14V302.0H1731.42V302.3H1731.70V302.6H1731.98V303.0H1732.26V303.3H1732.54V318.7H1732.82V319.0H1733.10V319.3H1733.38V319.6H1733.66V320.0H1733.94V320.3H1734.22V320.6H1734.50V320.9H1734.77V327.5H1735.05V327.8H1735.33V328.1H1735.61V328.4H1735.89V308.3H1737.01V305.8H1737.29V306.1H1737.57V306.5H1737.85V306.8H1738.13V307.2H1738.41V307.5H1738.69V307.9H1738.97V308.2H1739.25V322.8H1739.53V323.2H1739.81V323.5H1740.09V323.8H1740.37V367.5H1740.65V367.8H1740.93V368.0H1741.21V368.3H1741.49V368.6H1741.77V368.9H1742.05V369.2H1742.33V369.4H1742.61V342.2H1742.89V342.5H1743.17V342.9H1743.45V343.2H1743.73V343.5H1744.01V343.8H1744.29V349.5H1744.57V349.8H1744.85V350.2H1745.13V350.5H1745.41V333.6H1745.68V334.0H1745.96V334.3H1746.24V334.7H1746.52V301.9H1746.80V302.3H1747.08V302.7H1747.36V303.1H1747.64V373.3H1747.92V373.6H1748.20V373.9H1748.48V374.2H1748.76V374.5H1749.04V374.8H1749.32V375.1H1749.60V318.4H1749.88V318.8H1750.16V319.2H1750.44V319.6H1750.72V320.0H1751.00V322.3H1751.28V322.7H1751.56V323.1H1751.84V323.5H1752.12V323.8H1752.40V324.2H1752.68V324.6H1752.96V369.2H1754.64V363.7H1754.92V364.1H1755.20V364.4H1755.48V364.8H1755.76V336.9H1756.04V337.3H1756.31V337.6H1756.59V338.0H1756.87V338.4H1757.15V338.8H1757.43V339.2H1757.71V339.6H1757.99V370.0H1758.27V370.3H1758.55V370.7H1758.83V371.0H1759.11V371.4H1759.39V371.7H1759.67V372.1H1759.95V372.5H1760.23V357.9H1760.51V358.3H1760.79V358.7H1761.07V359.1H1761.35V359.5H1761.63V340.1H1761.91V340.5H1762.19V340.9H1762.47V341.4H1762.75V368.7H1763.03V369.0H1763.31V327.3H1764.43V387.6H1764.71V388.0H1764.99V388.3H1765.27V388.7H1765.55V389.1H1765.83V389.4H1766.11V389.8H1766.39V328.0H1766.67V328.5H1766.95V329.0H1767.22V329.5H1767.50V329.9H1767.78V405.7H1768.06V406.0H1768.34V406.4H1768.62V406.7H1768.90V364.6H1769.18V365.1H1769.46V365.5H1769.74V365.9H1770.02V366.4H1770.30V366.8H1770.58V367.2H1770.86V341.3H1771.14V341.8H1771.42V342.3H1771.70V342.8H1771.98V373.1H1772.26V373.6H1772.54V374.0H1772.82V374.5H1773.10V374.9H1773.38V341.4H1773.66V342.0H1773.94V342.5H1774.22V343.0H1774.50V343.5H1774.78V369.2H1775.06V369.6H1775.34V370.1H1775.62V370.6H1775.90V422.9H1776.18V423.3H1776.46V423.6H1776.74V424.0H1777.02V424.4H1777.30V424.8H1777.58V341.9H1777.85V342.5H1778.13V343.0H1778.41V343.6H1778.69V344.1H1778.97V403.1H1779.25V403.5H1779.53V404.0H1779.81V404.4H1780.09V404.8H1780.37V405.3H1780.65V405.7H1780.93V406.1H1781.21V376.8H1782.89V386.9H1783.17V387.4H1783.45V368.6H1783.73V369.2H1784.01V369.7H1784.29V370.3H1784.57V370.8H1784.85V371.4H1785.13V372.0H1785.41V392.0H1785.69V392.5H1785.97V393.0H1786.25V393.5H1786.53V394.0H1786.81V394.6H1787.09V395.1H1787.37V395.6H1787.65V394.6H1787.93V395.2H1788.21V395.7H1788.48V396.2H1788.76V396.8H1789.04V397.3H1789.32V397.9H1789.60V394.0H1789.88V394.5H1790.16V395.1H1790.44V395.7H1790.72V396.2H1791.00V396.8H1791.28V390.7H1791.56V391.3H1791.84V391.9H1792.12V392.5H1792.40V411.0H1794.08V402.8H1794.36V403.3H1794.64V403.9H1794.92V404.5H1795.20V403.9H1795.48V404.5H1795.76V405.1H1796.04V405.7H1796.32V389.4H1796.60V390.1H1796.88V390.8H1797.16V391.4H1797.44V434.4H1797.72V435.0H1798.00V435.5H1798.28V436.0H1798.56V436.6H1798.84V437.1H1799.12V437.7H1799.39V411.2H1799.67V411.8H1799.95V412.5H1800.23V413.1H1800.51V437.2H1800.79V437.8H1801.07V438.4H1801.35V439.0H1801.63V439.6H1801.91V440.1H1802.19V431.1H1802.47V431.8H1802.75V432.4H1803.03V433.0H1803.31V426.2H1804.99V430.8H1805.27V431.4H1805.55V424.9H1805.83V425.6H1806.11V426.3H1806.39V427.0H1806.67V427.7H1806.95V428.5H1807.23V429.2H1807.51V442.9H1807.79V443.6H1808.07V444.3H1808.35V445.0H1808.63V445.7H1808.91V446.4H1809.19V447.1H1809.47V447.8H1809.75V429.9H1810.02V430.7H1810.30V431.5H1810.58V432.3H1810.86V475.5H1811.14V476.1H1811.42V476.7H1811.70V477.4H1811.98V478.0H1812.26V437.4H1812.54V438.2H1812.82V439.0H1813.10V439.8H1813.38V440.7H1813.66V466.8H1813.94V452.8H1815.62V456.2H1815.90V457.0H1816.18V457.9H1816.46V458.7H1816.74V463.8H1817.02V464.6H1817.30V465.5H1817.58V466.3H1817.86V467.1H1818.14V468.0H1818.42V468.9H1818.70V458.1H1818.98V459.0H1819.26V460.0H1819.54V460.9H1819.82V471.1H1820.10V472.0H1820.38V472.9H1820.66V473.8H1820.93V474.7H1821.21V475.6H1821.49V476.5H1821.77V489.1H1822.05V489.9H1822.33V490.8H1822.61V491.7H1822.89V492.6H1823.17V493.5H1823.45V494.4H1823.73V475.7H1824.01V476.7H1824.29V477.8H1824.57V478.8H1824.85V502.2H1825.97V499.1H1826.25V500.1H1826.53V501.1H1826.81V502.1H1827.09V503.2H1827.37V504.2H1827.65V505.2H1827.93V496.8H1828.21V497.9H1828.49V499.0H1828.77V500.2H1829.05V501.3H1829.33V502.5H1829.61V503.7H1829.89V509.1H1830.17V510.2H1830.45V511.4H1830.73V512.6H1831.01V513.8H1831.29V515.0H1831.56V507.7H1831.84V509.0H1832.12V510.3H1832.40V511.7H1832.68V513.0H1832.96V514.4H1833.24V515.8H1833.52V526.2H1833.80V527.5H1834.08V528.8H1834.36V530.2H1834.64V531.5H1834.92V532.9H1835.20V534.3H1835.48V539.6H1835.76V540.9H1836.04V542.3H1836.32V559.2H1837.44V543.6H1837.72V545.2H1838.00V546.8H1838.28V548.5H1838.56V550.2H1838.84V551.9H1839.12V561.6H1839.40V563.3H1839.68V564.9H1839.96V566.6H1840.24V555.9H1840.52V557.9H1840.80V559.9H1841.08V562.0H1841.36V564.1H1841.64V566.3H1841.92V568.5H1842.20V578.5H1842.47V580.7H1842.75V582.9H1843.03V585.1H1843.31V587.5H1843.59V589.9H1843.87V592.4H1844.15V594.9H1844.43V597.9H1844.71V600.7H1844.99V603.5H1845.27V606.6H1845.55V609.7H1845.83V613.1H1846.11V616.7H1846.39V620.5H1846.67V623.8H1846.95V628.4H1847.23V633.6H1847.51V639.6H1847.79V654.2H1848.91V706.2H1878.42" stroke="#e62a2a" stroke-width="1.5" fill="none" stroke-linejoin="miter" shape-rendering="auto"/>
<rect x="745.6" y="695.2" width="6.0" height="9" fill="#fff"/><text x="748.6" y="703.4" font-size="10" text-anchor="middle" fill="#5a4038" letter-spacing="-0.55">0</text><rect x="750.6" y="695.2" width="6.0" height="9" fill="#fff"/><text x="753.6" y="703.4" font-size="10" text-anchor="middle" fill="#5a4038" letter-spacing="-0.55">0</text><rect x="755.6" y="695.2" width="6.0" height="9" fill="#fff"/><text x="758.6" y="703.4" font-size="10" text-anchor="middle" fill="#5a4038" letter-spacing="-0.55">0</text><rect x="760.6" y="695.2" width="6.0" height="9" fill="#fff"/><text x="763.6" y="703.4" font-size="10" text-anchor="middle" fill="#5a4038" letter-spacing="-0.55">0</text><rect x="765.6" y="695.2" width="6.0" height="9" fill="#fff"/><text x="768.6" y="703.4" font-size="10" text-anchor="middle" fill="#5a4038" letter-spacing="-0.55">0</text><rect x="770.6" y="695.2" width="6.0" height="9" fill="#fff"/><text x="773.6" y="703.4" font-size="10" text-anchor="middle" fill="#5a4038" letter-spacing="-0.55">0</text><rect x="772.5" y="639.4" width="11.0" height="9" fill="#fff"/><text x="778.0" y="647.6" font-size="10" text-anchor="middle" fill="#3c3c3c" letter-spacing="-0.55">15</text><rect x="783.4" y="555.8" width="11.0" height="9" fill="#fff"/><text x="788.9" y="564.0" font-size="10" text-anchor="middle" fill="#3c3c3c" letter-spacing="-0.55">37</text><rect x="794.3" y="498.8" width="11.0" height="9" fill="#fff"/><text x="799.8" y="507.0" font-size="10" text-anchor="middle" fill="#3c3c3c" letter-spacing="-0.55">52</text><rect x="805.2" y="441.8" width="11.0" height="9" fill="#fff"/><text x="810.7" y="450.0" font-size="10" text-anchor="middle" fill="#3c3c3c" letter-spacing="-0.55">67</text><rect x="816.1" y="468.4" width="11.0" height="9" fill="#fff"/><text x="821.6" y="476.6" font-size="10" text-anchor="middle" fill="#3c3c3c" letter-spacing="-0.55">60</text><rect x="827.1" y="407.6" width="11.0" height="9" fill="#fff"/><text x="832.6" y="415.8" font-size="10" text-anchor="middle" fill="#3c3c3c" letter-spacing="-0.55">76</text><rect x="838.0" y="422.8" width="11.0" height="9" fill="#fff"/><text x="843.5" y="431.0" font-size="10" text-anchor="middle" fill="#3c3c3c" letter-spacing="-0.55">72</text><rect x="848.9" y="369.6" width="11.0" height="9" fill="#fff"/><text x="854.4" y="377.8" font-size="10" text-anchor="middle" fill="#3c3c3c" letter-spacing="-0.55">86</text><rect x="860.3" y="365.8" width="11.0" height="9" fill="#fff"/><text x="865.8" y="374.0" font-size="10" text-anchor="middle" fill="#3c3c3c" letter-spacing="-0.55">87</text><rect x="870.7" y="339.2" width="11.0" height="9" fill="#fff"/><text x="876.2" y="347.4" font-size="10" text-anchor="middle" fill="#3c3c3c" letter-spacing="-0.55">94</text><rect x="882.2" y="381.0" width="11.0" height="9" fill="#fff"/><text x="887.7" y="389.2" font-size="10" text-anchor="middle" fill="#3c3c3c" letter-spacing="-0.55">83</text><rect x="893.1" y="335.4" width="11.0" height="9" fill="#fff"/><text x="898.6" y="343.6" font-size="10" text-anchor="middle" fill="#3c3c3c" letter-spacing="-0.55">95</text><rect x="901.9" y="293.5" width="16.0" height="9" fill="#fff"/><text x="909.9" y="301.7" font-size="10" text-anchor="middle" fill="#3c3c3c" letter-spacing="-0.55">106</text><rect x="918.7" y="289.7" width="16.0" height="9" fill="#fff"/><text x="926.7" y="297.9" font-size="10" text-anchor="middle" fill="#3c3c3c" letter-spacing="-0.55">107</text><rect x="935.5" y="274.5" width="16.0" height="9" fill="#fff"/><text x="943.5" y="282.7" font-size="10" text-anchor="middle" fill="#3c3c3c" letter-spacing="-0.55">111</text><rect x="952.6" y="266.9" width="16.0" height="9" fill="#fff"/><text x="960.6" y="275.1" font-size="10" text-anchor="middle" fill="#3c3c3c" letter-spacing="-0.55">113</text><rect x="969.2" y="278.3" width="16.0" height="9" fill="#fff"/><text x="977.2" y="286.5" font-size="10" text-anchor="middle" fill="#3c3c3c" letter-spacing="-0.55">110</text><rect x="986.4" y="289.7" width="16.0" height="9" fill="#fff"/><text x="994.4" y="297.9" font-size="10" text-anchor="middle" fill="#3c3c3c" letter-spacing="-0.55">107</text><rect x="1003.5" y="190.9" width="16.0" height="9" fill="#fff"/><text x="1011.5" y="199.1" font-size="10" text-anchor="middle" fill="#3c3c3c" letter-spacing="-0.55">133</text><rect x="1020.7" y="209.9" width="16.0" height="9" fill="#fff"/><text x="1028.7" y="218.1" font-size="10" text-anchor="middle" fill="#3c3c3c" letter-spacing="-0.55">128</text><rect x="1037.9" y="179.5" width="16.0" height="9" fill="#fff"/><text x="1045.9" y="187.7" font-size="10" text-anchor="middle" fill="#3c3c3c" letter-spacing="-0.55">136</text><rect x="1054.0" y="251.7" width="16.0" height="9" fill="#fff"/><text x="1062.0" y="259.9" font-size="10" text-anchor="middle" fill="#3c3c3c" letter-spacing="-0.55">117</text><rect x="1071.3" y="198.5" width="16.0" height="9" fill="#fff"/><text x="1079.3" y="206.7" font-size="10" text-anchor="middle" fill="#3c3c3c" letter-spacing="-0.55">131</text><rect x="1088.7" y="206.1" width="16.0" height="9" fill="#fff"/><text x="1096.7" y="214.3" font-size="10" text-anchor="middle" fill="#3c3c3c" letter-spacing="-0.55">129</text><rect x="1105.9" y="198.5" width="16.0" height="9" fill="#fff"/><text x="1113.9" y="206.7" font-size="10" text-anchor="middle" fill="#3c3c3c" letter-spacing="-0.55">131</text><rect x="1122.6" y="145.3" width="16.0" height="9" fill="#fff"/><text x="1130.6" y="153.5" font-size="10" text-anchor="middle" fill="#3c3c3c" letter-spacing="-0.55">145</text><rect x="1139.2" y="122.5" width="16.0" height="9" fill="#fff"/><text x="1147.2" y="130.7" font-size="10" text-anchor="middle" fill="#3c3c3c" letter-spacing="-0.55">151</text><rect x="1156.8" y="206.1" width="16.0" height="9" fill="#fff"/><text x="1164.8" y="214.3" font-size="10" text-anchor="middle" fill="#3c3c3c" letter-spacing="-0.55">129</text><rect x="1173.5" y="175.7" width="16.0" height="9" fill="#fff"/><text x="1181.5" y="183.9" font-size="10" text-anchor="middle" fill="#3c3c3c" letter-spacing="-0.55">137</text><rect x="1190.7" y="160.5" width="16.0" height="9" fill="#fff"/><text x="1198.7" y="168.7" font-size="10" text-anchor="middle" fill="#3c3c3c" letter-spacing="-0.55">141</text><rect x="1207.9" y="164.3" width="16.0" height="9" fill="#fff"/><text x="1215.9" y="172.5" font-size="10" text-anchor="middle" fill="#3c3c3c" letter-spacing="-0.55">140</text><rect x="1224.4" y="187.1" width="16.0" height="9" fill="#fff"/><text x="1232.4" y="195.3" font-size="10" text-anchor="middle" fill="#3c3c3c" letter-spacing="-0.55">134</text><rect x="1241.3" y="160.5" width="16.0" height="9" fill="#fff"/><text x="1249.3" y="168.7" font-size="10" text-anchor="middle" fill="#3c3c3c" letter-spacing="-0.55">141</text><rect x="1258.3" y="122.5" width="16.0" height="9" fill="#fff"/><text x="1266.3" y="130.7" font-size="10" text-anchor="middle" fill="#3c3c3c" letter-spacing="-0.55">151</text><rect x="1275.9" y="114.9" width="16.0" height="9" fill="#fff"/><text x="1283.9" y="123.1" font-size="10" text-anchor="middle" fill="#3c3c3c" letter-spacing="-0.55">153</text><rect x="1292.6" y="171.9" width="16.0" height="9" fill="#fff"/><text x="1300.6" y="180.1" font-size="10" text-anchor="middle" fill="#3c3c3c" letter-spacing="-0.55">138</text><rect x="1309.8" y="126.3" width="16.0" height="9" fill="#fff"/><text x="1317.8" y="134.5" font-size="10" text-anchor="middle" fill="#3c3c3c" letter-spacing="-0.55">150</text><rect x="1326.4" y="183.3" width="16.0" height="9" fill="#fff"/><text x="1334.4" y="191.5" font-size="10" text-anchor="middle" fill="#3c3c3c" letter-spacing="-0.55">135</text><rect x="1343.5" y="152.9" width="16.0" height="9" fill="#fff"/><text x="1351.5" y="161.1" font-size="10" text-anchor="middle" fill="#3c3c3c" letter-spacing="-0.55">143</text><rect x="1360.7" y="76.9" width="16.0" height="9" fill="#fff"/><text x="1368.7" y="85.1" font-size="10" text-anchor="middle" fill="#3c3c3c" letter-spacing="-0.55">163</text><rect x="1377.9" y="126.3" width="16.0" height="9" fill="#fff"/><text x="1385.9" y="134.5" font-size="10" text-anchor="middle" fill="#3c3c3c" letter-spacing="-0.55">150</text><rect x="1394.4" y="190.9" width="16.0" height="9" fill="#fff"/><text x="1402.4" y="199.1" font-size="10" text-anchor="middle" fill="#3c3c3c" letter-spacing="-0.55">133</text><rect x="1411.2" y="103.5" width="16.0" height="9" fill="#fff"/><text x="1419.2" y="111.7" font-size="10" text-anchor="middle" fill="#3c3c3c" letter-spacing="-0.55">156</text><rect x="1428.6" y="206.1" width="16.0" height="9" fill="#fff"/><text x="1436.6" y="214.3" font-size="10" text-anchor="middle" fill="#3c3c3c" letter-spacing="-0.55">129</text><rect x="1445.8" y="164.3" width="16.0" height="9" fill="#fff"/><text x="1453.8" y="172.5" font-size="10" text-anchor="middle" fill="#3c3c3c" letter-spacing="-0.55">140</text><rect x="1462.5" y="179.5" width="16.0" height="9" fill="#fff"/><text x="1470.5" y="187.7" font-size="10" text-anchor="middle" fill="#3c3c3c" letter-spacing="-0.55">136</text><rect x="1479.7" y="156.7" width="16.0" height="9" fill="#fff"/><text x="1487.7" y="164.9" font-size="10" text-anchor="middle" fill="#3c3c3c" letter-spacing="-0.55">142</text><rect x="1496.5" y="198.5" width="16.0" height="9" fill="#fff"/><text x="1504.5" y="206.7" font-size="10" text-anchor="middle" fill="#3c3c3c" letter-spacing="-0.55">131</text><rect x="1513.6" y="206.1" width="16.0" height="9" fill="#fff"/><text x="1521.6" y="214.3" font-size="10" text-anchor="middle" fill="#3c3c3c" letter-spacing="-0.55">129</text><rect x="1530.8" y="217.5" width="16.0" height="9" fill="#fff"/><text x="1538.8" y="225.7" font-size="10" text-anchor="middle" fill="#3c3c3c" letter-spacing="-0.55">126</text><rect x="1547.4" y="232.7" width="16.0" height="9" fill="#fff"/><text x="1555.4" y="240.9" font-size="10" text-anchor="middle" fill="#3c3c3c" letter-spacing="-0.55">122</text><rect x="1564.5" y="206.1" width="16.0" height="9" fill="#fff"/><text x="1572.5" y="214.3" font-size="10" text-anchor="middle" fill="#3c3c3c" letter-spacing="-0.55">129</text><rect x="1581.5" y="198.5" width="16.0" height="9" fill="#fff"/><text x="1589.5" y="206.7" font-size="10" text-anchor="middle" fill="#3c3c3c" letter-spacing="-0.55">131</text><rect x="1598.8" y="209.9" width="16.0" height="9" fill="#fff"/><text x="1606.8" y="218.1" font-size="10" text-anchor="middle" fill="#3c3c3c" letter-spacing="-0.55">128</text><rect x="1615.1" y="198.5" width="16.0" height="9" fill="#fff"/><text x="1623.1" y="206.7" font-size="10" text-anchor="middle" fill="#3c3c3c" letter-spacing="-0.55">131</text><rect x="1632.8" y="217.5" width="16.0" height="9" fill="#fff"/><text x="1640.8" y="225.7" font-size="10" text-anchor="middle" fill="#3c3c3c" letter-spacing="-0.55">126</text><rect x="1649.7" y="289.7" width="16.0" height="9" fill="#fff"/><text x="1657.7" y="297.9" font-size="10" text-anchor="middle" fill="#3c3c3c" letter-spacing="-0.55">107</text><rect x="1666.9" y="255.5" width="16.0" height="9" fill="#fff"/><text x="1674.9" y="263.7" font-size="10" text-anchor="middle" fill="#3c3c3c" letter-spacing="-0.55">116</text><rect x="1683.8" y="293.5" width="16.0" height="9" fill="#fff"/><text x="1691.8" y="301.7" font-size="10" text-anchor="middle" fill="#3c3c3c" letter-spacing="-0.55">106</text><rect x="1701.0" y="285.9" width="16.0" height="9" fill="#fff"/><text x="1709.0" y="294.1" font-size="10" text-anchor="middle" fill="#3c3c3c" letter-spacing="-0.55">108</text><rect x="1720.6" y="320.2" width="11.0" height="9" fill="#fff"/><text x="1726.1" y="328.4" font-size="10" text-anchor="middle" fill="#3c3c3c" letter-spacing="-0.55">99</text><rect x="1728.8" y="297.3" width="16.0" height="9" fill="#fff"/><text x="1736.8" y="305.5" font-size="10" text-anchor="middle" fill="#3c3c3c" letter-spacing="-0.55">105</text><rect x="1748.4" y="358.2" width="11.0" height="9" fill="#fff"/><text x="1753.9" y="366.4" font-size="10" text-anchor="middle" fill="#3c3c3c" letter-spacing="-0.55">89</text><rect x="1756.2" y="316.3" width="16.0" height="9" fill="#fff"/><text x="1764.2" y="324.5" font-size="10" text-anchor="middle" fill="#3c3c3c" letter-spacing="-0.55">100</text><rect x="1776.4" y="365.8" width="11.0" height="9" fill="#fff"/><text x="1781.9" y="374.0" font-size="10" text-anchor="middle" fill="#3c3c3c" letter-spacing="-0.55">87</text><rect x="1787.5" y="400.0" width="11.0" height="9" fill="#fff"/><text x="1793.0" y="408.2" font-size="10" text-anchor="middle" fill="#3c3c3c" letter-spacing="-0.55">78</text><rect x="1798.4" y="415.2" width="11.0" height="9" fill="#fff"/><text x="1803.9" y="423.4" font-size="10" text-anchor="middle" fill="#3c3c3c" letter-spacing="-0.55">74</text><rect x="1809.3" y="441.8" width="11.0" height="9" fill="#fff"/><text x="1814.8" y="450.0" font-size="10" text-anchor="middle" fill="#3c3c3c" letter-spacing="-0.55">67</text><rect x="1820.3" y="491.2" width="11.0" height="9" fill="#fff"/><text x="1825.8" y="499.4" font-size="10" text-anchor="middle" fill="#3c3c3c" letter-spacing="-0.55">54</text><rect x="1831.7" y="548.2" width="11.0" height="9" fill="#fff"/><text x="1837.2" y="556.4" font-size="10" text-anchor="middle" fill="#3c3c3c" letter-spacing="-0.55">39</text><rect x="1842.6" y="643.2" width="11.0" height="9" fill="#fff"/><text x="1848.1" y="651.4" font-size="10" text-anchor="middle" fill="#3c3c3c" letter-spacing="-0.55">14</text><rect x="1855.6" y="695.2" width="6.0" height="9" fill="#fff"/><text x="1858.6" y="703.4" font-size="10" text-anchor="middle" fill="#5a4038" letter-spacing="-0.55">0</text><rect x="1860.6" y="695.2" width="6.0" height="9" fill="#fff"/><text x="1863.6" y="703.4" font-size="10" text-anchor="middle" fill="#5a4038" letter-spacing="-0.55">0</text><rect x="1865.6" y="695.2" width="6.0" height="9" fill="#fff"/><text x="1868.6" y="703.4" font-size="10" text-anchor="middle" fill="#5a4038" letter-spacing="-0.55">0</text>
</svg></body></html>
